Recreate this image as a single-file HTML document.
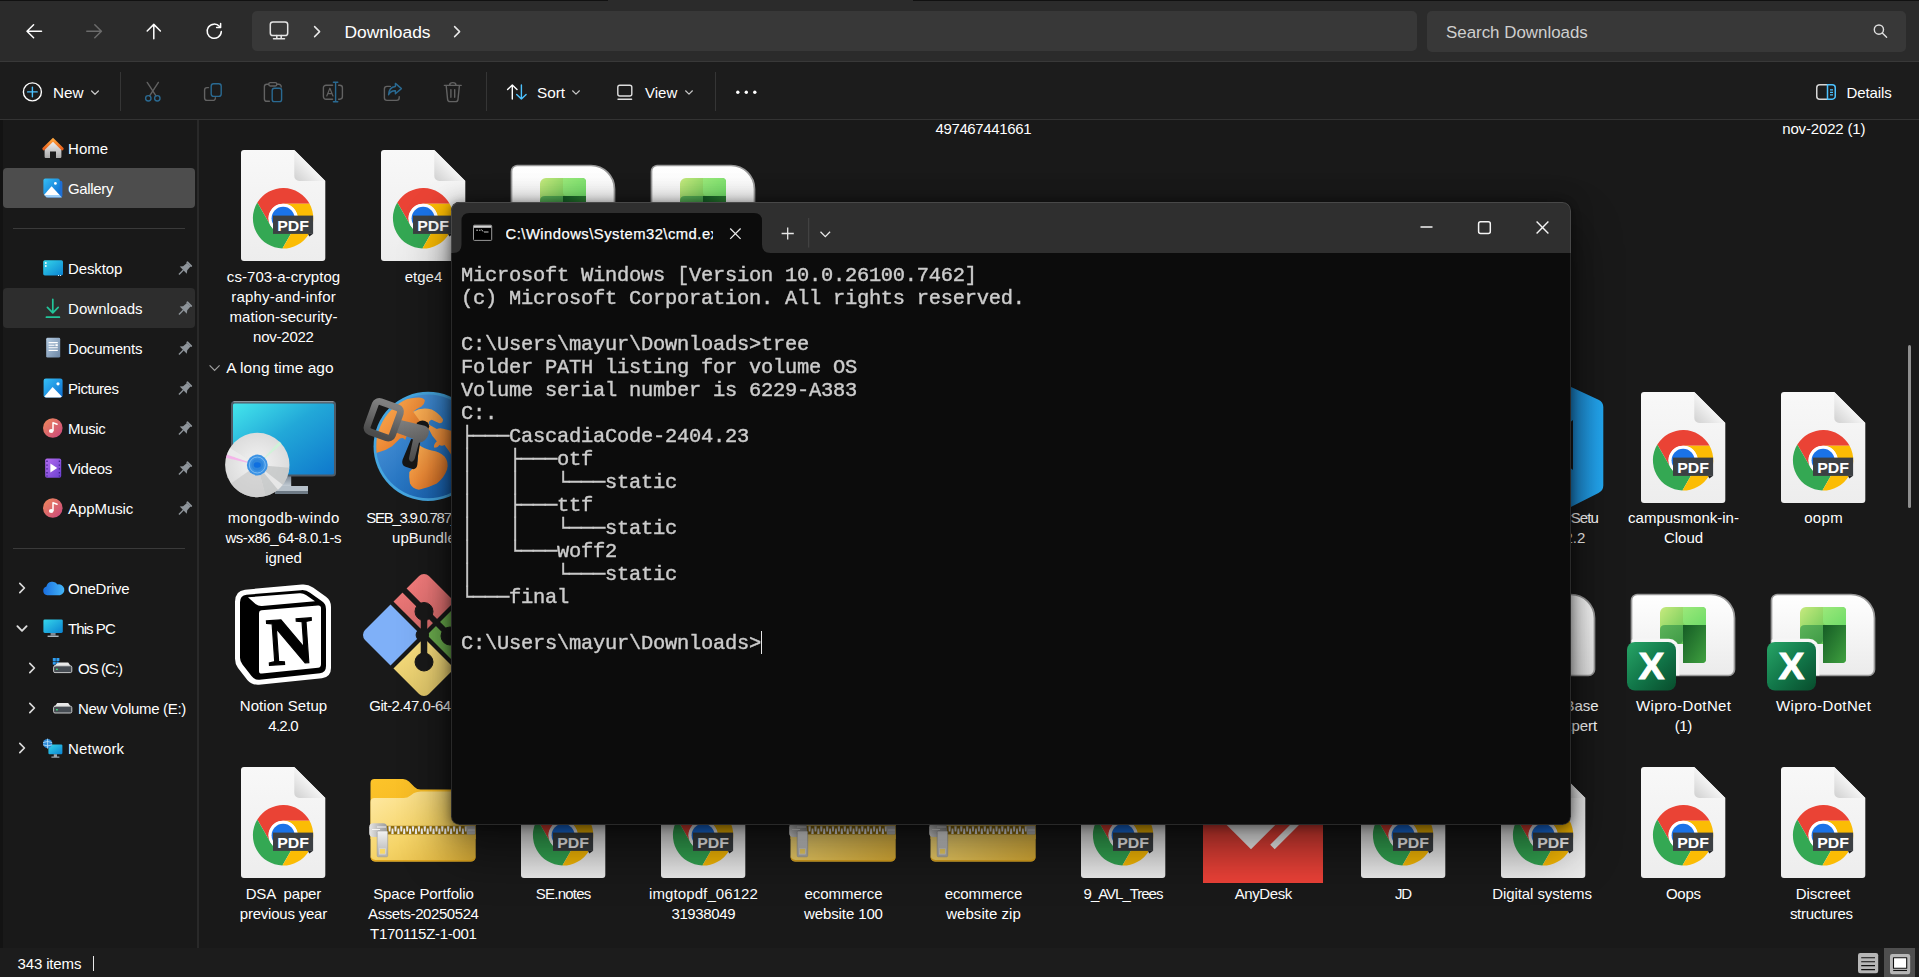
<!DOCTYPE html>
<html lang="en"><head><meta charset="utf-8"><title>Downloads</title>
<style>
*{box-sizing:border-box;margin:0;padding:0}
html,body{width:1919px;height:977px;overflow:hidden;background:#191919}
body{position:relative;font-family:"Liberation Sans",sans-serif;color:#fff;font-size:15px;-webkit-font-smoothing:antialiased}
.abs{position:absolute}
svg{position:absolute;overflow:visible}
.t{position:absolute;white-space:pre;line-height:20px;height:20px}
#nav{position:absolute;left:0;top:0;width:1919px;height:62px;background:#2b2b2b;border-top:1px solid #111;border-bottom:1px solid #383838}
#addr{position:absolute;left:252px;top:11px;width:1165px;height:40px;background:#383838;border-radius:5px}
#search{position:absolute;left:1427px;top:11px;width:479px;height:41px;background:#383838;border-radius:5px}
#tool{position:absolute;left:0;top:62px;width:1919px;height:58px;background:#1c1c1c;border-bottom:1px solid #333}
.vsep{position:absolute;top:72px;width:1px;height:39px;background:#353535}
#side{position:absolute;left:0;top:120px;width:198.5px;height:828px;background:#191919;border-right:2.5px solid #292929;border-left:3px solid #131313}
.sel{position:absolute;left:3px;width:192px;height:40px;border-radius:4px}
.hsep{position:absolute;left:13px;width:172px;height:1px;background:#3a3a3a}
#status{position:absolute;left:0;top:948px;width:1919px;height:29px;background:#1c1c1c}
.lbl{position:absolute;width:140px;text-align:center;line-height:20px;font-size:15px;color:#fff;white-space:pre}
#content{position:absolute;left:199px;top:120px;width:1720px;height:828px;overflow:hidden}
#cin{position:absolute;left:-199px;top:-120px;width:1919px;height:977px}
#term{position:absolute;left:451px;top:202px;width:1120.4px;height:623px;border-radius:8.5px;overflow:hidden;background:#0c0c0c}
#termshadow{position:absolute;left:451px;top:202px;width:1120.4px;height:623px;border-radius:8.5px;box-shadow:0 26px 48px 2px rgba(0,0,0,.46),0 0 22px rgba(0,0,0,.3),0 1px 9px rgba(0,0,0,.32)}
#tbar{position:absolute;left:0;top:0;width:1121px;height:51px;background:#2f2f2f}
pre#tt{position:absolute;left:10px;top:62px;will-change:transform;font-family:"Liberation Mono",monospace;font-size:20.4px;letter-spacing:-0.24px;line-height:23px;color:#cccccc;white-space:pre;-webkit-text-stroke:0.42px #cccccc}
</style></head>
<body>
<div id="nav"></div><div class="abs" style="left:608px;top:0;width:305px;height:1px;background:#2b2b2b"></div>
<div id="addr"></div><div id="search"></div>
<svg style="left:0;top:0" width="1919" height="977" viewBox="0 0 1919 977" fill="none" stroke-linecap="round" stroke-linejoin="round"><path d="M41.5 31.25H27.2M33.6 24.7L27 31.25L33.6 37.8" stroke="#ffffff" stroke-width="1.5"/><path d="M86.8 31.25H101.2M94.8 24.7L101.4 31.25L94.8 37.8" stroke="#6b6b6b" stroke-width="1.5"/><path d="M153.8 38.8V24.6M147.2 31L153.8 24.4L160.4 31" stroke="#ffffff" stroke-width="1.5"/><path d="M219.6 26.6A7.1 7.1 0 1 0 221.3 31.6" stroke="#ffffff" stroke-width="1.5"/><path d="M220.6 23.6V27.6H216.6" stroke="#ffffff" stroke-width="1.5"/><rect x="270.3" y="22" width="17.4" height="13.500" rx="2.6" stroke="#e4e4e4" stroke-width="1.5"/><path d="M273.500 38.800H284.500M276.800 35.600V38.600M281.200 35.600V38.600" stroke="#e4e4e4" stroke-width="1.5"/><path d="M314.6 26.6L319.6 31.6L314.6 36.6" stroke="#e8e8e8" stroke-width="1.5"/><path d="M454.6 26.6L459.6 31.6L454.6 36.6" stroke="#e8e8e8" stroke-width="1.5"/><circle cx="1878.9" cy="29.6" r="4.6" stroke="#e0e0e0" stroke-width="1.4"/><path d="M1882.3 33L1886.6 37.3" stroke="#e0e0e0" stroke-width="1.4"/></svg>
<div class="t" style="left:344.5px;top:21px;line-height:22px;height:22px;font-size:17.4px;color:#fff;">Downloads</div>
<div class="t" style="left:1446px;top:22px;line-height:21px;height:21px;font-size:16.9px;color:#cfcfcf;">Search Downloads</div>
<div id="tool"></div>
<div class="vsep" style="left:120px"></div>
<div class="vsep" style="left:486px"></div>
<div class="vsep" style="left:715px"></div>
<svg style="left:0;top:0" width="1919" height="977" viewBox="0 0 1919 977" fill="none" stroke-linecap="round" stroke-linejoin="round"><circle cx="32.4" cy="91.9" r="9" stroke="#ffffff" stroke-width="1.4"/><path d="M27.6 91.9H37.2M32.4 87.1V96.7" stroke="#4cc2ff" stroke-width="1.4"/><path d="M91.6 91L95 94.3L98.4 91" stroke="#c8c8c8" stroke-width="1.2"/><path d="M147.2 82.4L156 95.8M158.4 82.4L149.6 95.8" stroke="#626262" stroke-width="1.4"/><circle cx="148.3" cy="98.3" r="2.7" stroke="#2a6a92" stroke-width="1.4"/><circle cx="157.3" cy="98.3" r="2.7" stroke="#2a6a92" stroke-width="1.4"/><path d="M208.5 87.6H207A2.4 2.4 0 0 0 204.6 90V98A2.4 2.4 0 0 0 207 100.4H213A2.4 2.4 0 0 0 215.4 98V97.6" stroke="#626262" stroke-width="1.4"/><rect x="211.2" y="83.8" width="10" height="12.6" rx="2.4" stroke="#2a6a92" stroke-width="1.4"/><path d="M269.4 101.3H266.8A2.4 2.4 0 0 1 264.4 98.9V86.6A2.4 2.4 0 0 1 266.8 84.2H268.6M277 84.2H278.8A2.4 2.4 0 0 1 281.2 86.6V87" stroke="#626262" stroke-width="1.4"/><rect x="268.8" y="82.6" width="8" height="3.4" rx="1.4" stroke="#626262" stroke-width="1.4"/><rect x="272.2" y="88.2" width="9.4" height="13.4" rx="2.2" stroke="#2a6a92" stroke-width="1.4"/><path d="M332.6 85.2H326A2.6 2.6 0 0 0 323.4 87.8V96.6A2.6 2.6 0 0 0 326 99.2H332.6M338.6 85.2H339.8A2.6 2.6 0 0 1 342.4 87.8V96.6A2.6 2.6 0 0 1 339.8 99.2H338.6" stroke="#626262" stroke-width="1.4"/><path d="M326.8 96L329.9 88.2L333 96M327.8 93.6H332" stroke="#626262" stroke-width="1.2"/><path d="M335.6 82.6V101.4M333.4 82.2H337.8M333.4 101.8H337.8" stroke="#2a6a92" stroke-width="1.4"/><path d="M390.4 86.4H387A2.6 2.6 0 0 0 384.4 89V97.8A2.6 2.6 0 0 0 387 100.4H396.6A2.6 2.6 0 0 0 399.2 97.8V96.6" stroke="#626262" stroke-width="1.4"/><path d="M395.4 83.4L401.4 88.6L395.4 93.8V90.8C392 90.6 390 92 388.6 94.8C388.8 90.2 391 86.9 395.4 86.5Z" stroke="#2a6a92" stroke-width="1.4"/><path d="M444.4 85.4H461.2M449.6 85.2C449.6 81.8 456 81.8 456 85.2M446.2 85.6L447.6 99.4A2.4 2.4 0 0 0 450 101.6H455.6A2.4 2.4 0 0 0 458 99.4L459.4 85.6M450.9 89.6V97.2M454.7 89.6V97.2" stroke="#626262" stroke-width="1.4"/><path d="M512.3 99V85M507.6 89.6L512.3 84.9L517 89.6" stroke="#ffffff" stroke-width="1.4"/><path d="M521.4 85V99M516.7 94.4L521.4 99.1L526.1 94.4" stroke="#4cc2ff" stroke-width="1.4"/><path d="M572.6 90.8L576 94.1L579.4 90.8" stroke="#c8c8c8" stroke-width="1.2"/><rect x="617.8" y="85.2" width="14" height="10.8" rx="2" stroke="#dedede" stroke-width="1.4"/><path d="M618 99.2H631.6" stroke="#dedede" stroke-width="1.4"/><path d="M685.6 90.8L689 94.1L692.4 90.8" stroke="#c8c8c8" stroke-width="1.2"/><circle cx="737.8" cy="92.2" r="1.7" fill="#ffffff"/><circle cx="746.3" cy="92.2" r="1.7" fill="#ffffff"/><circle cx="754.8" cy="92.2" r="1.7" fill="#ffffff"/><path d="M1827.500 84.850H1819.750A3 3 0 0 0 1816.750 87.850V96.150A3 3 0 0 0 1819.750 99.150H1827.500" stroke="#d6d6d6" stroke-width="1.500"/><path d="M1827.500 84.850H1832.250A3 3 0 0 1 1835.250 87.850V96.150A3 3 0 0 1 1832.250 99.150H1827.500Z" stroke="#4cc2ff" stroke-width="1.500"/><path d="M1830 89.800H1833M1830 92.300H1833M1830 94.800H1833" stroke="#4cc2ff" stroke-width="1.300" stroke-linecap="butt"/></svg>
<div class="t" style="left:53px;top:82px;line-height:21px;height:21px;font-size:15.3px;color:#fff;">New</div>
<div class="t" style="left:537px;top:82px;line-height:21px;height:21px;font-size:15.3px;color:#fff;">Sort</div>
<div class="t" style="left:645px;top:82px;line-height:21px;height:21px;font-size:15px;color:#fff;">View</div>
<div class="t" style="left:1846.6px;top:82px;line-height:21px;height:21px;font-size:15px;color:#fff;letter-spacing:-0.122px;">Details</div>
<div id="side"></div>
<div class="sel" style="top:168px;background:#4d4d4d"></div>
<div class="sel" style="top:288px;background:#2d2d2d"></div>
<div class="hsep" style="top:228px"></div><div class="hsep" style="top:548px"></div>
<div class="t" style="left:68px;top:138px;line-height:21px;height:21px;font-size:15px;color:#fff;letter-spacing:0.047px;">Home</div>
<div class="t" style="left:68px;top:178px;line-height:21px;height:21px;font-size:15px;color:#fff;letter-spacing:-0.331px;">Gallery</div>
<div class="t" style="left:68px;top:258px;line-height:21px;height:21px;font-size:15px;color:#fff;letter-spacing:-0.118px;">Desktop</div>
<div class="t" style="left:68px;top:298px;line-height:21px;height:21px;font-size:15px;color:#fff;letter-spacing:0.043px;">Downloads</div>
<div class="t" style="left:68px;top:338px;line-height:21px;height:21px;font-size:15px;color:#fff;letter-spacing:-0.174px;">Documents</div>
<div class="t" style="left:68px;top:378px;line-height:21px;height:21px;font-size:15px;color:#fff;letter-spacing:-0.461px;">Pictures</div>
<div class="t" style="left:68px;top:418px;line-height:21px;height:21px;font-size:15px;color:#fff;letter-spacing:-0.354px;">Music</div>
<div class="t" style="left:68px;top:458px;line-height:21px;height:21px;font-size:15px;color:#fff;letter-spacing:-0.249px;">Videos</div>
<div class="t" style="left:68px;top:498px;line-height:21px;height:21px;font-size:15px;color:#fff;letter-spacing:-0.070px;">AppMusic</div>
<div class="t" style="left:68px;top:578px;line-height:21px;height:21px;font-size:15px;color:#fff;letter-spacing:-0.257px;">OneDrive</div>
<div class="t" style="left:68px;top:618px;line-height:21px;height:21px;font-size:15px;color:#fff;letter-spacing:-0.935px;">This PC</div>
<div class="t" style="left:78px;top:658px;line-height:21px;height:21px;font-size:15px;color:#fff;letter-spacing:-0.962px;">OS (C:)</div>
<div class="t" style="left:78px;top:698px;line-height:21px;height:21px;font-size:15px;color:#fff;letter-spacing:-0.303px;">New Volume (E:)</div>
<div class="t" style="left:68px;top:738px;line-height:21px;height:21px;font-size:15px;color:#fff;letter-spacing:0.184px;">Network</div>
<svg style="left:0;top:0" width="1919" height="977" viewBox="0 0 1919 977" fill="none" stroke-linecap="round" stroke-linejoin="round"><defs><linearGradient id="gHome" x1="0" y1="0" x2="0" y2="1"><stop offset="0" stop-color="#ffa43d"/><stop offset="1" stop-color="#e8601c"/></linearGradient><linearGradient id="gBlue" x1="0" y1="0" x2="1" y2="1"><stop offset="0" stop-color="#36c0f6"/><stop offset="1" stop-color="#0b6cd0"/></linearGradient><linearGradient id="gDesk" x1="0" y1="0" x2="1" y2="1"><stop offset="0" stop-color="#35d6ea"/><stop offset="1" stop-color="#0b83d2"/></linearGradient><linearGradient id="gMusic" x1="0" y1="0" x2="1" y2="1"><stop offset="0" stop-color="#f08a5a"/><stop offset="1" stop-color="#c8457e"/></linearGradient><linearGradient id="gVid" x1="0" y1="0" x2="1" y2="1"><stop offset="0" stop-color="#b56cf0"/><stop offset="1" stop-color="#6a3fd0"/></linearGradient><linearGradient id="gCloud" x1="0" y1="0" x2="1" y2="0"><stop offset="0" stop-color="#1a6fe0"/><stop offset="1" stop-color="#44b6f8"/></linearGradient><linearGradient id="gHouse" x1="0" y1="0" x2="0" y2="1"><stop offset="0" stop-color="#f4f4f4"/><stop offset="1" stop-color="#a9a9a9"/></linearGradient><linearGradient id="gDoc" x1="0" y1="0" x2="1" y2="1"><stop offset="0" stop-color="#b4cbe2"/><stop offset="1" stop-color="#6d87a4"/></linearGradient></defs><path d="M44.600 148.400V156.800A1.200 1.200 0 0 0 45.800 158H50V151.400H56V158H60.200A1.200 1.200 0 0 0 61.400 156.800V148.400L53 140.800Z" fill="url(#gHouse)" stroke="none"/><path d="M43.800 148.800L53 139.800L62.200 148.800" stroke="url(#gHome)" stroke-width="3" fill="none" stroke-linejoin="miter" stroke-linecap="round"/><rect x="46.4" y="180.8" width="16" height="16.6" rx="2" fill="#1d6fd6" stroke="none"/><rect x="43.4" y="178.4" width="16.4" height="16.6" rx="2" fill="url(#gBlue)" stroke="none"/><path d="M44 195L51.6 186.2L59.6 195Z" fill="#fff" stroke="none"/><path d="M46.6 197.4H62L59.6 195H44Z" fill="#9fd0f8" stroke="none"/><circle cx="55.4" cy="183.4" r="1.4" fill="#fff" stroke="none"/><rect x="43.2" y="260.2" width="19.8" height="15.2" rx="1.6" fill="url(#gDesk)" stroke="none"/><rect x="45" y="262.2" width="1.6" height="1.6" fill="#fff" stroke="none"/><rect x="45" y="265.2" width="1.6" height="1.6" fill="#fff" stroke="none"/><rect x="58" y="275" width="1" height="1" fill="#d8e8f0" stroke="none"/><rect x="60" y="275" width="1" height="1" fill="#d8e8f0" stroke="none"/><path d="M52.8 299.4V312.6M47.4 307.4L52.8 312.8L58.2 307.4M46.4 317.2H59.4" stroke="#23c49a" stroke-width="1.7" fill="none"/><rect x="46.200" y="337.800" width="14" height="19.800" rx="1.400" fill="url(#gDoc)" stroke="none"/><path d="M48.600 342.600H57.800M48.600 345.200H54.600M48.600 347.800H57.800M48.600 350.400H57.800" stroke="#fff" stroke-width="1.100" fill="none" stroke-linecap="butt"/><rect x="55.400" y="344.200" width="2.400" height="2" fill="#fff" stroke="none"/><rect x="43.6" y="378.6" width="19" height="18.8" rx="2.2" fill="url(#gBlue)" stroke="none"/><path d="M44.4 396.6L52.6 387L61.8 396.6Q61.4 397.4 60.4 397.4H45.8Q44.8 397.4 44.4 396.6Z" fill="#fff" stroke="none"/><circle cx="58" cy="383.8" r="1.6" fill="#fff" stroke="none"/><circle cx="52.8" cy="428" r="9.8" fill="url(#gMusic)" stroke="none"/><path d="M53 422.8V430.6M53 422.8L57 424.2" stroke="#fff" stroke-width="1.5" fill="none"/><ellipse cx="51.2" cy="431" rx="2.3" ry="1.9" fill="#fff" stroke="none"/><circle cx="52.8" cy="508" r="9.8" fill="url(#gMusic)" stroke="none"/><path d="M53 502.8V510.6M53 502.8L57 504.2" stroke="#fff" stroke-width="1.5" fill="none"/><ellipse cx="51.2" cy="511" rx="2.3" ry="1.9" fill="#fff" stroke="none"/><rect x="45.200" y="458.400" width="16" height="19.400" rx="1.800" fill="url(#gVid)" stroke="none"/><path d="M50.400 463.600L57.200 468L50.400 472.400Z" fill="#fff" stroke="none"/><path d="M47 460.600V462M47 464.400V465.800M47 468.200V469.600M47 472V473.400M47 475.400V476.400M59.400 460.600V462M59.400 464.400V465.800M59.400 468.200V469.600M59.400 472V473.400M59.400 475.400V476.400" stroke="#3d1f8a" stroke-width="1.300" fill="none" stroke-linecap="butt"/><g transform="translate(184.7 268.7) rotate(45) scale(1.13)" fill="#8e949a" stroke="none"><rect x="-3.1" y="-6.6" width="6.2" height="1.8" rx=".6"/><path d="M-2.2 -5H2.2L2.6 -0.6L4.4 1.8H-4.4L-2.6 -0.6Z"/><rect x="-.6" y="1.6" width="1.2" height="5.6"/></g><g transform="translate(184.7 308.7) rotate(45) scale(1.13)" fill="#8e949a" stroke="none"><rect x="-3.1" y="-6.6" width="6.2" height="1.8" rx=".6"/><path d="M-2.2 -5H2.2L2.6 -0.6L4.4 1.8H-4.4L-2.6 -0.6Z"/><rect x="-.6" y="1.6" width="1.2" height="5.6"/></g><g transform="translate(184.7 348.7) rotate(45) scale(1.13)" fill="#8e949a" stroke="none"><rect x="-3.1" y="-6.6" width="6.2" height="1.8" rx=".6"/><path d="M-2.2 -5H2.2L2.6 -0.6L4.4 1.8H-4.4L-2.6 -0.6Z"/><rect x="-.6" y="1.6" width="1.2" height="5.6"/></g><g transform="translate(184.7 388.7) rotate(45) scale(1.13)" fill="#8e949a" stroke="none"><rect x="-3.1" y="-6.6" width="6.2" height="1.8" rx=".6"/><path d="M-2.2 -5H2.2L2.6 -0.6L4.4 1.8H-4.4L-2.6 -0.6Z"/><rect x="-.6" y="1.6" width="1.2" height="5.6"/></g><g transform="translate(184.7 428.7) rotate(45) scale(1.13)" fill="#8e949a" stroke="none"><rect x="-3.1" y="-6.6" width="6.2" height="1.8" rx=".6"/><path d="M-2.2 -5H2.2L2.6 -0.6L4.4 1.8H-4.4L-2.6 -0.6Z"/><rect x="-.6" y="1.6" width="1.2" height="5.6"/></g><g transform="translate(184.7 468.7) rotate(45) scale(1.13)" fill="#8e949a" stroke="none"><rect x="-3.1" y="-6.6" width="6.2" height="1.8" rx=".6"/><path d="M-2.2 -5H2.2L2.6 -0.6L4.4 1.8H-4.4L-2.6 -0.6Z"/><rect x="-.6" y="1.6" width="1.2" height="5.6"/></g><g transform="translate(184.7 508.7) rotate(45) scale(1.13)" fill="#8e949a" stroke="none"><rect x="-3.1" y="-6.6" width="6.2" height="1.8" rx=".6"/><path d="M-2.2 -5H2.2L2.6 -0.6L4.4 1.8H-4.4L-2.6 -0.6Z"/><rect x="-.6" y="1.6" width="1.2" height="5.6"/></g><path d="M47.2 595.2A4.4 4.4 0 0 1 46.4 586.6A6.2 6.2 0 0 1 57.6 584.4A5.4 5.4 0 0 1 60 595.2Z" fill="url(#gCloud)" stroke="none"/><rect x="43.4" y="619.4" width="19.4" height="13.6" rx="1.4" fill="url(#gDesk)" stroke="none"/><path d="M50.6 633H55.6V635.6H50.6Z" fill="#7d8a96" stroke="none"/><path d="M47.6 635.6H58.6V637H47.6Z" fill="#aab4bd" stroke="none"/><path d="M54.800 666L57.200 662.600H68.200L70.600 666Z" fill="#e9e9e9" stroke="none"/><rect x="53.600" y="665.800" width="18.200" height="6.800" rx="1.400" fill="#464c53" stroke="#d9d9d9" stroke-width=".9"/><rect x="56" y="668.600" width="1.800" height="1.400" fill="#3fe07a" stroke="none"/><rect x="52.800" y="658" width="3" height="3" fill="#2f9df0" stroke="none"/><rect x="56.400" y="658" width="3" height="3" fill="#2f9df0" stroke="none"/><rect x="52.800" y="661.600" width="3" height="3" fill="#2f9df0" stroke="none"/><rect x="56.400" y="661.600" width="2.200" height="1.600" fill="#2f9df0" stroke="none"/><path d="M54.800 706.400L57.200 703H68.200L70.600 706.400Z" fill="#e9e9e9" stroke="none"/><rect x="53.600" y="706.200" width="18.200" height="6.800" rx="1.400" fill="#464c53" stroke="#d9d9d9" stroke-width=".9"/><rect x="56" y="709" width="1.800" height="1.400" fill="#3fe07a" stroke="none"/><rect x="48.4" y="744.6" width="14" height="9.6" rx="1.2" fill="url(#gDesk)" stroke="none"/><path d="M53.8 754.2H57V756.4H53.8ZM51.4 756.4H59.4V757.8H51.4Z" fill="#9aa6b0" stroke="none"/><circle cx="47.6" cy="743.6" r="4.6" fill="#2d8ad8" stroke="none"/><path d="M43.4 742.4Q47.6 740.4 51.8 742.4M43.4 745Q47.6 747 51.8 745M47.6 739V748.2" stroke="#bfe3fa" stroke-width=".8" fill="none"/><path d="M19.8 583.4L24.4 588L19.8 592.6" stroke="#dcdcdc" stroke-width="1.7" fill="none"/><path d="M17.4 626.1999999999999L22 630.8L26.6 626.1999999999999" stroke="#dcdcdc" stroke-width="1.9" fill="none"/><path d="M29.8 663.4L34.4 668L29.8 672.6" stroke="#dcdcdc" stroke-width="1.7" fill="none"/><path d="M29.8 703.4L34.4 708L29.8 712.6" stroke="#dcdcdc" stroke-width="1.7" fill="none"/><path d="M19.8 743.4L24.4 748L19.8 752.6" stroke="#dcdcdc" stroke-width="1.7" fill="none"/></svg>
<div id="content"><div id="cin">
<div class="lbl" style="left:913.5px;top:118px;line-height:21px;height:21px;letter-spacing:-0.376px;margin-left:-0.19px">497467441661</div>
<div class="lbl" style="left:1753.9px;top:118px;line-height:21px;height:21px;letter-spacing:-0.154px;margin-left:-0.08px">nov-2022 (1)</div>
<svg style="left:240.8px;top:150.35px" width="85" height="111" viewBox="0 0 85 111"><defs><linearGradient id="pg1" x1="0" y1="0" x2="0" y2="1"><stop offset="0" stop-color="#f8f8f8"/><stop offset="1" stop-color="#ededed"/></linearGradient><linearGradient id="pf2" x1="0" y1="1" x2="1" y2="0"><stop offset="0" stop-color="#cfcfcf"/><stop offset=".45" stop-color="#f1f1f1"/><stop offset="1" stop-color="#fbfbfb"/></linearGradient></defs><path d="M3 0H53.300L84.300 31V108A3 3 0 0 1 81.300 111H3A3 3 0 0 1 0 108V3A3 3 0 0 1 3 0Z" fill="url(#pg1)"/><path d="M53.300 0L84.300 31H58.300A5 5 0 0 1 53.300 26Z" fill="url(#pf2)"/><circle cx="42.100" cy="68.300" r="29.800" fill="#fff"/><path d="M42.10 53.80L68.59 53.80A30.2 30.2 0 0 0 16.30 52.61L29.54 75.55A14.5 14.5 0 0 1 42.10 53.80Z" fill="#ea4335"/><path d="M29.54 75.55L16.30 52.61A30.2 30.2 0 0 0 41.41 98.49L54.66 75.55A14.5 14.5 0 0 1 29.54 75.55Z" fill="#34a853"/><path d="M54.66 75.55L41.41 98.49A30.2 30.2 0 0 0 68.59 53.80L42.10 53.80A14.5 14.5 0 0 1 54.66 75.55Z" fill="#fbbc04"/><circle cx="42.100" cy="68.300" r="14.500" fill="#fff"/><circle cx="42.100" cy="68.300" r="11.500" fill="#1a73e8"/><path d="M67 83.800H72.100L68.300 86.600Z" fill="#202124"/><rect x="32" y="65.600" width="40.100" height="18.300" fill="#3c4043"/><text x="52.100" y="80.500" text-anchor="middle" font-family="Liberation Sans, sans-serif" font-weight="bold" font-size="14.500" fill="#fff" textLength="31.800" lengthAdjust="spacingAndGlyphs">PDF</text></svg>
<div class="lbl" style="left:213.5px;top:266px;line-height:21px;height:21px;letter-spacing:0.047px;margin-left:0.02px">cs-703-a-cryptog</div><div class="lbl" style="left:213.5px;top:286px;line-height:21px;height:21px;letter-spacing:0.198px;margin-left:0.10px">raphy-and-infor</div><div class="lbl" style="left:213.5px;top:306px;line-height:21px;height:21px;letter-spacing:0.082px;margin-left:0.04px">mation-security-</div><div class="lbl" style="left:213.5px;top:326px;line-height:21px;height:21px;letter-spacing:-0.244px;margin-left:-0.12px">nov-2022</div>
<svg style="left:380.8px;top:150.35px" width="85" height="111" viewBox="0 0 85 111"><defs><linearGradient id="pg3" x1="0" y1="0" x2="0" y2="1"><stop offset="0" stop-color="#f8f8f8"/><stop offset="1" stop-color="#ededed"/></linearGradient><linearGradient id="pf4" x1="0" y1="1" x2="1" y2="0"><stop offset="0" stop-color="#cfcfcf"/><stop offset=".45" stop-color="#f1f1f1"/><stop offset="1" stop-color="#fbfbfb"/></linearGradient></defs><path d="M3 0H53.300L84.300 31V108A3 3 0 0 1 81.300 111H3A3 3 0 0 1 0 108V3A3 3 0 0 1 3 0Z" fill="url(#pg3)"/><path d="M53.300 0L84.300 31H58.300A5 5 0 0 1 53.300 26Z" fill="url(#pf4)"/><circle cx="42.100" cy="68.300" r="29.800" fill="#fff"/><path d="M42.10 53.80L68.59 53.80A30.2 30.2 0 0 0 16.30 52.61L29.54 75.55A14.5 14.5 0 0 1 42.10 53.80Z" fill="#ea4335"/><path d="M29.54 75.55L16.30 52.61A30.2 30.2 0 0 0 41.41 98.49L54.66 75.55A14.5 14.5 0 0 1 29.54 75.55Z" fill="#34a853"/><path d="M54.66 75.55L41.41 98.49A30.2 30.2 0 0 0 68.59 53.80L42.10 53.80A14.5 14.5 0 0 1 54.66 75.55Z" fill="#fbbc04"/><circle cx="42.100" cy="68.300" r="14.500" fill="#fff"/><circle cx="42.100" cy="68.300" r="11.500" fill="#1a73e8"/><path d="M67 83.800H72.100L68.300 86.600Z" fill="#202124"/><rect x="32" y="65.600" width="40.100" height="18.300" fill="#3c4043"/><text x="52.100" y="80.500" text-anchor="middle" font-family="Liberation Sans, sans-serif" font-weight="bold" font-size="14.500" fill="#fff" textLength="31.800" lengthAdjust="spacingAndGlyphs">PDF</text></svg>
<div class="lbl" style="left:353.5px;top:266px;line-height:21px;height:21px;letter-spacing:0.013px;margin-left:0.01px">etge4</div>
<svg style="left:507px;top:165px" width="112" height="100" viewBox="0 0 112 100"><defs><linearGradient id="xk9" x1="0" y1="0" x2="0" y2="1"><stop offset="0" stop-color="#ffffff"/><stop offset="1" stop-color="#ebebeb"/></linearGradient><linearGradient id="xa5" x1="0" y1="0" x2="1" y2="1"><stop offset="0" stop-color="#c7ea7e"/><stop offset=".6" stop-color="#5fc552"/><stop offset="1" stop-color="#4cb548"/></linearGradient><linearGradient id="xb6" x1="0" y1="0" x2="1" y2="1"><stop offset="0" stop-color="#155c25"/><stop offset="1" stop-color="#3fa03f"/></linearGradient><linearGradient id="xc7" x1="0" y1="0" x2="1" y2="1"><stop offset="0" stop-color="#9be87a"/><stop offset="1" stop-color="#6fdc68"/></linearGradient><linearGradient id="xh10" x1="0" y1="0" x2="1" y2="1"><stop offset="0" stop-color="#5cb35a"/><stop offset="1" stop-color="#3f9a46"/></linearGradient><linearGradient id="xe8" x1="0" y1="0" x2="1" y2="1"><stop offset="0" stop-color="#27a567"/><stop offset=".5" stop-color="#12784a"/><stop offset="1" stop-color="#084c2c"/></linearGradient></defs><clipPath id="xp11"><path d="M10 .5H84A23.5 23.5 0 0 1 107.5 24V75.5A6 6 0 0 1 101.5 81.5H10A6 6 0 0 1 4.500 75.5V6.500A6 6 0 0 1 10 .5Z"/></clipPath><path d="M10 .5H84A23.5 23.5 0 0 1 107.5 24V75.5A6 6 0 0 1 101.5 81.5H10A6 6 0 0 1 4.500 75.5V6.500A6 6 0 0 1 10 .5Z" fill="url(#xk9)" stroke="#989898" stroke-width="1.700"/><path d="M39 13H75A4 4 0 0 1 79 17V65A4 4 0 0 1 75 69H56V50H33V19A6 6 0 0 1 39 13Z" fill="url(#xa5)"/><path d="M56 31H79V65A4 4 0 0 1 75 69H56Z" fill="url(#xb6)"/><path d="M33 36Q33 31 38 31H56V45Q56 50 51 50H33Z" fill="url(#xh10)"/><path d="M56 13H75A4 4 0 0 1 79 17V31H60A4 4 0 0 1 56 27Z" fill="url(#xc7)"/><rect x="-1.6" y="44.800" width="54" height="54" rx="10.500" fill="#f6f6f6" clip-path="url(#xp11)"/><rect x="0" y="48" width="49" height="48.6" rx="8" fill="url(#xe8)"/><text x="24.5" y="85.4" text-anchor="middle" font-family="Liberation Sans, sans-serif" font-weight="bold" font-size="36.5" fill="#fff" stroke="#fff" stroke-width=".9" textLength="26" lengthAdjust="spacingAndGlyphs">X</text></svg>
<div class="lbl" style="left:493.5px;top:266px;line-height:21px;height:21px">Book1</div>
<svg style="left:647px;top:165px" width="112" height="100" viewBox="0 0 112 100"><defs><linearGradient id="xk16" x1="0" y1="0" x2="0" y2="1"><stop offset="0" stop-color="#ffffff"/><stop offset="1" stop-color="#ebebeb"/></linearGradient><linearGradient id="xa12" x1="0" y1="0" x2="1" y2="1"><stop offset="0" stop-color="#c7ea7e"/><stop offset=".6" stop-color="#5fc552"/><stop offset="1" stop-color="#4cb548"/></linearGradient><linearGradient id="xb13" x1="0" y1="0" x2="1" y2="1"><stop offset="0" stop-color="#155c25"/><stop offset="1" stop-color="#3fa03f"/></linearGradient><linearGradient id="xc14" x1="0" y1="0" x2="1" y2="1"><stop offset="0" stop-color="#9be87a"/><stop offset="1" stop-color="#6fdc68"/></linearGradient><linearGradient id="xh17" x1="0" y1="0" x2="1" y2="1"><stop offset="0" stop-color="#5cb35a"/><stop offset="1" stop-color="#3f9a46"/></linearGradient><linearGradient id="xe15" x1="0" y1="0" x2="1" y2="1"><stop offset="0" stop-color="#27a567"/><stop offset=".5" stop-color="#12784a"/><stop offset="1" stop-color="#084c2c"/></linearGradient></defs><clipPath id="xp18"><path d="M10 .5H84A23.5 23.5 0 0 1 107.5 24V75.5A6 6 0 0 1 101.5 81.5H10A6 6 0 0 1 4.500 75.5V6.500A6 6 0 0 1 10 .5Z"/></clipPath><path d="M10 .5H84A23.5 23.5 0 0 1 107.5 24V75.5A6 6 0 0 1 101.5 81.5H10A6 6 0 0 1 4.500 75.5V6.500A6 6 0 0 1 10 .5Z" fill="url(#xk16)" stroke="#989898" stroke-width="1.700"/><path d="M39 13H75A4 4 0 0 1 79 17V65A4 4 0 0 1 75 69H56V50H33V19A6 6 0 0 1 39 13Z" fill="url(#xa12)"/><path d="M56 31H79V65A4 4 0 0 1 75 69H56Z" fill="url(#xb13)"/><path d="M33 36Q33 31 38 31H56V45Q56 50 51 50H33Z" fill="url(#xh17)"/><path d="M56 13H75A4 4 0 0 1 79 17V31H60A4 4 0 0 1 56 27Z" fill="url(#xc14)"/><rect x="-1.6" y="44.800" width="54" height="54" rx="10.500" fill="#f6f6f6" clip-path="url(#xp18)"/><rect x="0" y="48" width="49" height="48.6" rx="8" fill="url(#xe15)"/><text x="24.5" y="85.4" text-anchor="middle" font-family="Liberation Sans, sans-serif" font-weight="bold" font-size="36.5" fill="#fff" stroke="#fff" stroke-width=".9" textLength="26" lengthAdjust="spacingAndGlyphs">X</text></svg>
<div class="lbl" style="left:633.5px;top:266px;line-height:21px;height:21px">Book2</div>
<svg style="left:0;top:0" width="1919" height="977" viewBox="0 0 1919 977"><path d="M209.600 365.300L214.600 370.300L219.600 365.300" stroke="#a0a0a0" stroke-width="1.200" fill="none"/></svg>
<div class="t" style="left:226.200px;top:357px;line-height:21px;height:21px;font-size:15.500px;letter-spacing:0.043px">A long time ago</div>
<svg style="left:0;top:0" width="1919" height="977" viewBox="0 0 1919 977"><defs><linearGradient id="mon" x1="0" y1="0" x2="1" y2="1"><stop offset="0" stop-color="#44e6ec"/><stop offset=".45" stop-color="#22a8d8"/><stop offset="1" stop-color="#0f78cc"/></linearGradient><linearGradient id="stand" x1="0" y1="0" x2="0" y2="1"><stop offset="0" stop-color="#7b8794"/><stop offset="1" stop-color="#c3ccd4"/></linearGradient><radialGradient id="disc" cx=".5" cy=".5" r=".5"><stop offset="0" stop-color="#f4f4f4"/><stop offset="1" stop-color="#dcdcdc"/></radialGradient></defs><path d="M277 476H291.200V486H277Z" fill="url(#stand)"/><path d="M275 486H308V494H275Z" fill="#b6c0c9"/><path d="M275 491H308V494H275Z" fill="#6f7b86"/><rect x="231" y="401" width="105" height="75.500" rx="3.500" fill="#4e5a66"/><path d="M233.500 401.700H333.500" stroke="#8d979f" stroke-width="1.200"/><rect x="233" y="403.500" width="101" height="71" rx="1.500" fill="url(#mon)"/><circle cx="257.300" cy="465" r="32.200" fill="url(#disc)"/><path d="M257.3 465L289.4 467.8A32.2 32.2 0 0 1 265.6 496.1Z" fill="#c2c4c4" opacity="0.75"/><path d="M257.3 465L282.7 484.8A32.2 32.2 0 0 1 278.0 489.7Z" fill="#eeeeee" opacity="0.8"/><path d="M257.3 465L265.6 496.1A32.2 32.2 0 0 1 230.9 483.5Z" fill="#cacaca" opacity="0.7"/><path d="M257.3 465L225.9 457.8A32.2 32.2 0 0 1 226.9 454.5Z" fill="#f6b0ea" opacity="0.9"/><path d="M257.3 465L226.9 454.5A32.2 32.2 0 0 1 230.0 447.9Z" fill="#eeeeee" opacity="0.7"/><path d="M257.3 465L279.3 441.5A32.2 32.2 0 0 1 281.6 443.9Z" fill="#ccf6d6" opacity="0.8"/><circle cx="257.300" cy="465" r="10.400" fill="#3b92e4"/><circle cx="257.300" cy="465" r="8" fill="none" stroke="#8cc4f4" stroke-width=".8"/><circle cx="257.300" cy="465" r="5.800" fill="#2f86dc"/><ellipse cx="257.300" cy="465" rx="3.600" ry="2.800" fill="#0f6fe0"/></svg>
<div class="lbl" style="left:213.5px;top:507px;line-height:21px;height:21px;letter-spacing:0.405px;margin-left:0.20px">mongodb-windo</div><div class="lbl" style="left:213.5px;top:527px;line-height:21px;height:21px;letter-spacing:-0.453px;margin-left:-0.23px">ws-x86_64-8.0.1-s</div><div class="lbl" style="left:213.5px;top:547px;line-height:21px;height:21px;letter-spacing:-0.001px;margin-left:-0.00px">igned</div>
<svg style="left:0;top:0" width="1919" height="977" viewBox="0 0 1919 977"><defs><linearGradient id="glb" x1="0" y1="0" x2="1" y2="1"><stop offset="0" stop-color="#5a9fe0"/><stop offset=".5" stop-color="#2a78c4"/><stop offset="1" stop-color="#0f55a4"/></linearGradient><linearGradient id="land" x1="0" y1="0" x2="1" y2="1"><stop offset="0" stop-color="#fdb458"/><stop offset=".5" stop-color="#ee8c38"/><stop offset="1" stop-color="#c8621e"/></linearGradient><linearGradient id="key" x1="0" y1="0" x2="0" y2="1"><stop offset="0" stop-color="#808080"/><stop offset=".5" stop-color="#666"/><stop offset="1" stop-color="#4c4c4c"/></linearGradient><clipPath id="gclip"><circle cx="572" cy="480" r="406"/></clipPath></defs><g transform="translate(355 385) scale(0.127877)"><circle cx="572" cy="480" r="427" fill="#45a6e0"/><circle cx="572" cy="480" r="406" fill="url(#glb)"/><g clip-path="url(#gclip)" fill="url(#land)"><path d="M150 540L178 528Q240 512 290 478Q330 440 352 418Q380 405 392 430L420 360L560 330L520 250L455 212Q470 190 520 168Q550 140 545 118Q530 90 470 100L330 120L190 260L150 400Z"/><path d="M455 210Q520 170 600 192Q650 215 688 268Q690 300 660 300Q630 285 600 272Q570 280 580 310L640 345Q660 335 690 342L760 360L900 380L900 700L760 560Q740 520 700 470Q680 480 660 470Q650 490 620 490Q610 470 640 440Q600 400 580 350L520 300Z"/><path d="M500 468Q540 500 600 512Q660 520 700 560Q735 600 720 660Q700 720 640 770Q580 800 500 820Q450 810 430 770Q420 720 425 680Q470 640 488 600Z"/></g><ellipse cx="528" cy="322" rx="52" ry="44" fill="#161616"/><path d="M440 420L372 585Q360 625 395 640L455 658Q485 655 488 620L492 560L510 450Z" fill="#161616"/><path d="M330 268L545 318Q590 335 575 385Q560 440 500 452L470 565Q462 600 440 600Q415 592 425 560L455 420L320 372Z" fill="url(#key)"/><g transform="translate(225 272) rotate(20)"><rect x="-104" y="-125" width="208" height="250" rx="34" fill="none" stroke="url(#key)" stroke-width="54"/></g></g></svg>
<div class="t" style="left:366.3px;top:507px;line-height:21px;height:21px;letter-spacing:-1.270px">SEB_3.9.0.787_Set</div>
<div class="t" style="left:392px;top:527px;line-height:21px;height:21px;letter-spacing:0.050px">upBundle</div>
<svg style="left:0;top:0" width="1919" height="977" viewBox="0 0 1919 977"><defs><linearGradient id="vs" x1="0" y1="0" x2="1" y2="0"><stop offset="0" stop-color="#1a78c2"/><stop offset="1" stop-color="#23a9f2"/></linearGradient></defs><path d="M1549 376.800L1598.500 399.800Q1603.300 402 1603.300 407V485.500Q1603.300 490.500 1598.500 493L1549 518Z" fill="url(#vs)"/><path d="M1573 420V470L1540 445Z" fill="#191919"/></svg>
<div class="t" style="left:1492.1px;letter-spacing:-0.9px;top:507px;line-height:21px;height:21px">VSCodeUserSetu</div>
<div class="t" style="left:1488.6px;top:527px;line-height:21px;height:21px">p-x64-1.96.2.2</div>
<svg style="left:1640.8px;top:391.55px" width="85" height="111" viewBox="0 0 85 111"><defs><linearGradient id="pg19" x1="0" y1="0" x2="0" y2="1"><stop offset="0" stop-color="#f8f8f8"/><stop offset="1" stop-color="#ededed"/></linearGradient><linearGradient id="pf20" x1="0" y1="1" x2="1" y2="0"><stop offset="0" stop-color="#cfcfcf"/><stop offset=".45" stop-color="#f1f1f1"/><stop offset="1" stop-color="#fbfbfb"/></linearGradient></defs><path d="M3 0H53.300L84.300 31V108A3 3 0 0 1 81.300 111H3A3 3 0 0 1 0 108V3A3 3 0 0 1 3 0Z" fill="url(#pg19)"/><path d="M53.300 0L84.300 31H58.300A5 5 0 0 1 53.300 26Z" fill="url(#pf20)"/><circle cx="42.100" cy="68.300" r="29.800" fill="#fff"/><path d="M42.10 53.80L68.59 53.80A30.2 30.2 0 0 0 16.30 52.61L29.54 75.55A14.5 14.5 0 0 1 42.10 53.80Z" fill="#ea4335"/><path d="M29.54 75.55L16.30 52.61A30.2 30.2 0 0 0 41.41 98.49L54.66 75.55A14.5 14.5 0 0 1 29.54 75.55Z" fill="#34a853"/><path d="M54.66 75.55L41.41 98.49A30.2 30.2 0 0 0 68.59 53.80L42.10 53.80A14.5 14.5 0 0 1 54.66 75.55Z" fill="#fbbc04"/><circle cx="42.100" cy="68.300" r="14.500" fill="#fff"/><circle cx="42.100" cy="68.300" r="11.500" fill="#1a73e8"/><path d="M67 83.800H72.100L68.300 86.600Z" fill="#202124"/><rect x="32" y="65.600" width="40.100" height="18.300" fill="#3c4043"/><text x="52.100" y="80.500" text-anchor="middle" font-family="Liberation Sans, sans-serif" font-weight="bold" font-size="14.500" fill="#fff" textLength="31.800" lengthAdjust="spacingAndGlyphs">PDF</text></svg>
<div class="lbl" style="left:1613.5px;top:507px;line-height:21px;height:21px;letter-spacing:0.002px;margin-left:0.00px">campusmonk-in-</div><div class="lbl" style="left:1613.5px;top:527px;line-height:21px;height:21px;letter-spacing:-0.019px;margin-left:-0.01px">Cloud</div>
<svg style="left:1780.8px;top:391.55px" width="85" height="111" viewBox="0 0 85 111"><defs><linearGradient id="pg21" x1="0" y1="0" x2="0" y2="1"><stop offset="0" stop-color="#f8f8f8"/><stop offset="1" stop-color="#ededed"/></linearGradient><linearGradient id="pf22" x1="0" y1="1" x2="1" y2="0"><stop offset="0" stop-color="#cfcfcf"/><stop offset=".45" stop-color="#f1f1f1"/><stop offset="1" stop-color="#fbfbfb"/></linearGradient></defs><path d="M3 0H53.300L84.300 31V108A3 3 0 0 1 81.300 111H3A3 3 0 0 1 0 108V3A3 3 0 0 1 3 0Z" fill="url(#pg21)"/><path d="M53.300 0L84.300 31H58.300A5 5 0 0 1 53.300 26Z" fill="url(#pf22)"/><circle cx="42.100" cy="68.300" r="29.800" fill="#fff"/><path d="M42.10 53.80L68.59 53.80A30.2 30.2 0 0 0 16.30 52.61L29.54 75.55A14.5 14.5 0 0 1 42.10 53.80Z" fill="#ea4335"/><path d="M29.54 75.55L16.30 52.61A30.2 30.2 0 0 0 41.41 98.49L54.66 75.55A14.5 14.5 0 0 1 29.54 75.55Z" fill="#34a853"/><path d="M54.66 75.55L41.41 98.49A30.2 30.2 0 0 0 68.59 53.80L42.10 53.80A14.5 14.5 0 0 1 54.66 75.55Z" fill="#fbbc04"/><circle cx="42.100" cy="68.300" r="14.500" fill="#fff"/><circle cx="42.100" cy="68.300" r="11.500" fill="#1a73e8"/><path d="M67 83.800H72.100L68.300 86.600Z" fill="#202124"/><rect x="32" y="65.600" width="40.100" height="18.300" fill="#3c4043"/><text x="52.100" y="80.500" text-anchor="middle" font-family="Liberation Sans, sans-serif" font-weight="bold" font-size="14.500" fill="#fff" textLength="31.800" lengthAdjust="spacingAndGlyphs">PDF</text></svg>
<div class="lbl" style="left:1753.5px;top:507px;line-height:21px;height:21px;letter-spacing:0.394px;margin-left:0.20px">oopm</div>
<svg style="left:0;top:0" width="1919" height="977" viewBox="0 0 1919 977"><g transform="matrix(1 0 0 1.017 0 -11.400)"><path d="M245 591L302 586Q308 585.500 313 589L326 598Q331 601.500 331 608V668Q331 677 322 678L259 684.500Q252 685 247.500 680L238 668Q235 664 235 659V603Q235 592 245 591Z" fill="#fff"/><path d="M246.500 596L301 591.500Q306 591 310 594L322 602.500Q326 605 326 610V666Q326 672.500 320 673.200L259.500 679.500Q254.500 680 251.500 676L242.500 664.500Q240 661.500 240 658V603.500Q240 596.600 246.500 596Z" fill="#000"/><path d="M248 598.500L299.500 594.500Q303 594.200 306 596.200L315 602.500L262 607Q258.500 607.300 255.500 605Z" fill="#fff"/><path d="M259 614Q259 611.500 261.500 611.200L318 606.500Q321 606.300 321 609V664Q321 667.500 318 667.800L262 673.500Q259 673.800 259 671Z" fill="#fff"/><text x="290" y="664" text-anchor="middle" font-family="Liberation Serif, serif" font-weight="bold" font-size="67" fill="#000" stroke="#000" stroke-width="1.200" transform="rotate(-4 290 640)" textLength="47" lengthAdjust="spacingAndGlyphs">N</text></g></svg>
<div class="lbl" style="left:213.5px;top:695px;line-height:21px;height:21px;letter-spacing:0.064px;margin-left:0.03px">Notion Setup</div><div class="lbl" style="left:213.5px;top:715px;line-height:21px;height:21px;letter-spacing:-0.752px;margin-left:-0.38px">4.2.0</div>
<svg style="left:0;top:0" width="1919" height="977" viewBox="0 0 1919 977"><defs><clipPath id="gitc"><rect x="-45.200" y="-45.200" width="90.400" height="90.400" rx="7"/></clipPath><linearGradient id="gr" x1="0" y1="0" x2="1" y2="1"><stop offset="0" stop-color="#f87e7e"/><stop offset="1" stop-color="#d86c6c"/></linearGradient><linearGradient id="gy" x1="0" y1="0" x2="1" y2="1"><stop offset="0" stop-color="#fce180"/><stop offset="1" stop-color="#e0c668"/></linearGradient></defs><g transform="translate(424 635) rotate(45)"><g clip-path="url(#gitc)"><rect x="-46" y="-46" width="43.900" height="43.900" fill="url(#gr)"/><rect x="2.100" y="-46" width="43.900" height="43.900" fill="#6cae4e"/><rect x="-46" y="2.100" width="43.900" height="43.900" fill="#7fb0f8"/><rect x="2.100" y="2.100" width="43.900" height="43.900" fill="url(#gy)"/></g></g><g stroke="#191919" fill="#191919"><path d="M424 612V662" stroke-width="6.500" fill="none"/><path d="M403 589L452 638" stroke-width="6" fill="none"/><circle cx="422.300" cy="635" r="6.200"/><circle cx="424" cy="611.500" r="9"/><circle cx="424" cy="662" r="9"/><circle cx="450" cy="636" r="9"/></g></svg>
<div class="t" style="left:369.2px;top:695px;line-height:21px;height:21px;letter-spacing:-0.465px">Git-2.47.0-64-bit</div>
<svg style="left:1487px;top:594px" width="112" height="100" viewBox="0 0 112 100"><defs><linearGradient id="xk27" x1="0" y1="0" x2="0" y2="1"><stop offset="0" stop-color="#ffffff"/><stop offset="1" stop-color="#ebebeb"/></linearGradient><linearGradient id="xa23" x1="0" y1="0" x2="1" y2="1"><stop offset="0" stop-color="#c7ea7e"/><stop offset=".6" stop-color="#5fc552"/><stop offset="1" stop-color="#4cb548"/></linearGradient><linearGradient id="xb24" x1="0" y1="0" x2="1" y2="1"><stop offset="0" stop-color="#155c25"/><stop offset="1" stop-color="#3fa03f"/></linearGradient><linearGradient id="xc25" x1="0" y1="0" x2="1" y2="1"><stop offset="0" stop-color="#9be87a"/><stop offset="1" stop-color="#6fdc68"/></linearGradient><linearGradient id="xh28" x1="0" y1="0" x2="1" y2="1"><stop offset="0" stop-color="#5cb35a"/><stop offset="1" stop-color="#3f9a46"/></linearGradient><linearGradient id="xe26" x1="0" y1="0" x2="1" y2="1"><stop offset="0" stop-color="#27a567"/><stop offset=".5" stop-color="#12784a"/><stop offset="1" stop-color="#084c2c"/></linearGradient></defs><clipPath id="xp29"><path d="M10 .5H84A23.5 23.5 0 0 1 107.5 24V75.5A6 6 0 0 1 101.5 81.5H10A6 6 0 0 1 4.500 75.5V6.500A6 6 0 0 1 10 .5Z"/></clipPath><path d="M10 .5H84A23.5 23.5 0 0 1 107.5 24V75.5A6 6 0 0 1 101.5 81.5H10A6 6 0 0 1 4.500 75.5V6.500A6 6 0 0 1 10 .5Z" fill="url(#xk27)" stroke="#989898" stroke-width="1.700"/><path d="M39 13H75A4 4 0 0 1 79 17V65A4 4 0 0 1 75 69H56V50H33V19A6 6 0 0 1 39 13Z" fill="url(#xa23)"/><path d="M56 31H79V65A4 4 0 0 1 75 69H56Z" fill="url(#xb24)"/><path d="M33 36Q33 31 38 31H56V45Q56 50 51 50H33Z" fill="url(#xh28)"/><path d="M56 13H75A4 4 0 0 1 79 17V31H60A4 4 0 0 1 56 27Z" fill="url(#xc25)"/><rect x="-1.6" y="44.800" width="54" height="54" rx="10.500" fill="#f6f6f6" clip-path="url(#xp29)"/><rect x="0" y="48" width="49" height="48.6" rx="8" fill="url(#xe26)"/><text x="24.5" y="85.4" text-anchor="middle" font-family="Liberation Sans, sans-serif" font-weight="bold" font-size="36.5" fill="#fff" stroke="#fff" stroke-width=".9" textLength="26" lengthAdjust="spacingAndGlyphs">X</text></svg>
<div class="t" style="left:1499.1px;top:695px;line-height:21px;height:21px">SQL DataBase</div>
<div class="t" style="left:1506.4px;top:715px;line-height:21px;height:21px">DBMS Expert</div>
<svg style="left:1627px;top:594px" width="112" height="100" viewBox="0 0 112 100"><defs><linearGradient id="xk34" x1="0" y1="0" x2="0" y2="1"><stop offset="0" stop-color="#ffffff"/><stop offset="1" stop-color="#ebebeb"/></linearGradient><linearGradient id="xa30" x1="0" y1="0" x2="1" y2="1"><stop offset="0" stop-color="#c7ea7e"/><stop offset=".6" stop-color="#5fc552"/><stop offset="1" stop-color="#4cb548"/></linearGradient><linearGradient id="xb31" x1="0" y1="0" x2="1" y2="1"><stop offset="0" stop-color="#155c25"/><stop offset="1" stop-color="#3fa03f"/></linearGradient><linearGradient id="xc32" x1="0" y1="0" x2="1" y2="1"><stop offset="0" stop-color="#9be87a"/><stop offset="1" stop-color="#6fdc68"/></linearGradient><linearGradient id="xh35" x1="0" y1="0" x2="1" y2="1"><stop offset="0" stop-color="#5cb35a"/><stop offset="1" stop-color="#3f9a46"/></linearGradient><linearGradient id="xe33" x1="0" y1="0" x2="1" y2="1"><stop offset="0" stop-color="#27a567"/><stop offset=".5" stop-color="#12784a"/><stop offset="1" stop-color="#084c2c"/></linearGradient></defs><clipPath id="xp36"><path d="M10 .5H84A23.5 23.5 0 0 1 107.5 24V75.5A6 6 0 0 1 101.5 81.5H10A6 6 0 0 1 4.500 75.5V6.500A6 6 0 0 1 10 .5Z"/></clipPath><path d="M10 .5H84A23.5 23.5 0 0 1 107.5 24V75.5A6 6 0 0 1 101.5 81.5H10A6 6 0 0 1 4.500 75.5V6.500A6 6 0 0 1 10 .5Z" fill="url(#xk34)" stroke="#989898" stroke-width="1.700"/><path d="M39 13H75A4 4 0 0 1 79 17V65A4 4 0 0 1 75 69H56V50H33V19A6 6 0 0 1 39 13Z" fill="url(#xa30)"/><path d="M56 31H79V65A4 4 0 0 1 75 69H56Z" fill="url(#xb31)"/><path d="M33 36Q33 31 38 31H56V45Q56 50 51 50H33Z" fill="url(#xh35)"/><path d="M56 13H75A4 4 0 0 1 79 17V31H60A4 4 0 0 1 56 27Z" fill="url(#xc32)"/><rect x="-1.6" y="44.800" width="54" height="54" rx="10.500" fill="#f6f6f6" clip-path="url(#xp36)"/><rect x="0" y="48" width="49" height="48.6" rx="8" fill="url(#xe33)"/><text x="24.5" y="85.4" text-anchor="middle" font-family="Liberation Sans, sans-serif" font-weight="bold" font-size="36.5" fill="#fff" stroke="#fff" stroke-width=".9" textLength="26" lengthAdjust="spacingAndGlyphs">X</text></svg>
<div class="lbl" style="left:1613.5px;top:695px;line-height:21px;height:21px;letter-spacing:0.379px;margin-left:0.19px">Wipro-DotNet</div><div class="lbl" style="left:1613.5px;top:715px;line-height:21px;height:21px;letter-spacing:-0.478px;margin-left:-0.24px">(1)</div>
<svg style="left:1767px;top:594px" width="112" height="100" viewBox="0 0 112 100"><defs><linearGradient id="xk41" x1="0" y1="0" x2="0" y2="1"><stop offset="0" stop-color="#ffffff"/><stop offset="1" stop-color="#ebebeb"/></linearGradient><linearGradient id="xa37" x1="0" y1="0" x2="1" y2="1"><stop offset="0" stop-color="#c7ea7e"/><stop offset=".6" stop-color="#5fc552"/><stop offset="1" stop-color="#4cb548"/></linearGradient><linearGradient id="xb38" x1="0" y1="0" x2="1" y2="1"><stop offset="0" stop-color="#155c25"/><stop offset="1" stop-color="#3fa03f"/></linearGradient><linearGradient id="xc39" x1="0" y1="0" x2="1" y2="1"><stop offset="0" stop-color="#9be87a"/><stop offset="1" stop-color="#6fdc68"/></linearGradient><linearGradient id="xh42" x1="0" y1="0" x2="1" y2="1"><stop offset="0" stop-color="#5cb35a"/><stop offset="1" stop-color="#3f9a46"/></linearGradient><linearGradient id="xe40" x1="0" y1="0" x2="1" y2="1"><stop offset="0" stop-color="#27a567"/><stop offset=".5" stop-color="#12784a"/><stop offset="1" stop-color="#084c2c"/></linearGradient></defs><clipPath id="xp43"><path d="M10 .5H84A23.5 23.5 0 0 1 107.5 24V75.5A6 6 0 0 1 101.5 81.5H10A6 6 0 0 1 4.500 75.5V6.500A6 6 0 0 1 10 .5Z"/></clipPath><path d="M10 .5H84A23.5 23.5 0 0 1 107.5 24V75.5A6 6 0 0 1 101.5 81.5H10A6 6 0 0 1 4.500 75.5V6.500A6 6 0 0 1 10 .5Z" fill="url(#xk41)" stroke="#989898" stroke-width="1.700"/><path d="M39 13H75A4 4 0 0 1 79 17V65A4 4 0 0 1 75 69H56V50H33V19A6 6 0 0 1 39 13Z" fill="url(#xa37)"/><path d="M56 31H79V65A4 4 0 0 1 75 69H56Z" fill="url(#xb38)"/><path d="M33 36Q33 31 38 31H56V45Q56 50 51 50H33Z" fill="url(#xh42)"/><path d="M56 13H75A4 4 0 0 1 79 17V31H60A4 4 0 0 1 56 27Z" fill="url(#xc39)"/><rect x="-1.6" y="44.800" width="54" height="54" rx="10.500" fill="#f6f6f6" clip-path="url(#xp43)"/><rect x="0" y="48" width="49" height="48.6" rx="8" fill="url(#xe40)"/><text x="24.5" y="85.4" text-anchor="middle" font-family="Liberation Sans, sans-serif" font-weight="bold" font-size="36.5" fill="#fff" stroke="#fff" stroke-width=".9" textLength="26" lengthAdjust="spacingAndGlyphs">X</text></svg>
<div class="lbl" style="left:1753.5px;top:695px;line-height:21px;height:21px;letter-spacing:0.379px;margin-left:0.19px">Wipro-DotNet</div>
<svg style="left:240.8px;top:767.40px" width="85" height="111" viewBox="0 0 85 111"><defs><linearGradient id="pg44" x1="0" y1="0" x2="0" y2="1"><stop offset="0" stop-color="#f8f8f8"/><stop offset="1" stop-color="#ededed"/></linearGradient><linearGradient id="pf45" x1="0" y1="1" x2="1" y2="0"><stop offset="0" stop-color="#cfcfcf"/><stop offset=".45" stop-color="#f1f1f1"/><stop offset="1" stop-color="#fbfbfb"/></linearGradient></defs><path d="M3 0H53.300L84.300 31V108A3 3 0 0 1 81.300 111H3A3 3 0 0 1 0 108V3A3 3 0 0 1 3 0Z" fill="url(#pg44)"/><path d="M53.300 0L84.300 31H58.300A5 5 0 0 1 53.300 26Z" fill="url(#pf45)"/><circle cx="42.100" cy="68.300" r="29.800" fill="#fff"/><path d="M42.10 53.80L68.59 53.80A30.2 30.2 0 0 0 16.30 52.61L29.54 75.55A14.5 14.5 0 0 1 42.10 53.80Z" fill="#ea4335"/><path d="M29.54 75.55L16.30 52.61A30.2 30.2 0 0 0 41.41 98.49L54.66 75.55A14.5 14.5 0 0 1 29.54 75.55Z" fill="#34a853"/><path d="M54.66 75.55L41.41 98.49A30.2 30.2 0 0 0 68.59 53.80L42.10 53.80A14.5 14.5 0 0 1 54.66 75.55Z" fill="#fbbc04"/><circle cx="42.100" cy="68.300" r="14.500" fill="#fff"/><circle cx="42.100" cy="68.300" r="11.500" fill="#1a73e8"/><path d="M67 83.800H72.100L68.300 86.600Z" fill="#202124"/><rect x="32" y="65.600" width="40.100" height="18.300" fill="#3c4043"/><text x="52.100" y="80.500" text-anchor="middle" font-family="Liberation Sans, sans-serif" font-weight="bold" font-size="14.500" fill="#fff" textLength="31.800" lengthAdjust="spacingAndGlyphs">PDF</text></svg>
<div class="lbl" style="left:213.5px;top:883px;line-height:21px;height:21px;letter-spacing:-0.112px;margin-left:-0.06px">DSA  paper</div><div class="lbl" style="left:213.5px;top:903px;line-height:21px;height:21px;letter-spacing:-0.219px;margin-left:-0.11px">previous year</div>
<svg style="left:368px;top:779px" width="110" height="84" viewBox="0 0 110 84"><defs><linearGradient id="za46" x1="0" y1="0" x2="1" y2="1"><stop offset="0" stop-color="#ffeaa6"/><stop offset=".5" stop-color="#f5d468"/><stop offset="1" stop-color="#dcae34"/></linearGradient><linearGradient id="zb47" x1="0" y1="0" x2="1" y2="1"><stop offset="0" stop-color="#fdc42a"/><stop offset="1" stop-color="#eeaf1c"/></linearGradient><linearGradient id="zc48" x1="0" y1="0" x2="1" y2="0"><stop offset="0" stop-color="#e6e6e6"/><stop offset=".6" stop-color="#b4b4b4"/><stop offset="1" stop-color="#9c9c9c"/></linearGradient><linearGradient id="zd49" x1="0" y1="0" x2="0" y2="1"><stop offset="0" stop-color="#f2f2f2"/><stop offset="1" stop-color="#b0b0b0"/></linearGradient></defs><path d="M6.500 0H35Q38.500 0 41 2.500L46.500 8Q49 10.500 52.500 10.500H102.700A5 5 0 0 1 107.700 15.500V60H2.500V4A4 4 0 0 1 6.500 0Z" fill="url(#zb47)"/><path d="M6.500 19H35.500Q39.500 19 42.500 16.500L46 14Q49 12.500 53 12.500H103.700A4 4 0 0 1 107.700 16.500V77.600A5 5 0 0 1 102.700 82.600H7.500A5 5 0 0 1 2.500 77.600V23A4 4 0 0 1 6.500 19Z" fill="url(#za46)"/><path d="M2.500 76V77.600A5 5 0 0 0 7.500 82.600H102.700A5 5 0 0 0 107.700 77.600V76A5 5 0 0 1 102.700 81H7.500A5 5 0 0 1 2.500 76Z" fill="#dfa51c"/><rect x="2.500" y="46.800" width="105.200" height="8.600" fill="#8f6c0c"/><path d="M20.4 47.300H22.8L22.4 52.500H20.8ZM23.7 49.600H25.3L25.7 54.900H23.3ZM26.3 47.300H28.7L28.3 52.500H26.7ZM29.6 49.600H31.2L31.6 54.900H29.2ZM32.1 47.300H34.5L34.1 52.500H32.5ZM35.4 49.600H37.0L37.4 54.900H35.0ZM38.0 47.300H40.4L40.0 52.500H38.4ZM41.3 49.600H42.9L43.3 54.900H40.9ZM43.8 47.300H46.2L45.8 52.500H44.2ZM47.2 49.600H48.8L49.2 54.900H46.8ZM49.7 47.300H52.1L51.7 52.500H50.1ZM53.0 49.600H54.6L55.0 54.900H52.6ZM55.6 47.300H58.0L57.6 52.500H56.0ZM58.9 49.600H60.5L60.9 54.900H58.5ZM61.4 47.300H63.8L63.4 52.500H61.8ZM64.8 49.600H66.3L66.8 54.900H64.3ZM67.3 47.300H69.7L69.3 52.500H67.7ZM70.6 49.600H72.2L72.6 54.900H70.2ZM73.1 47.300H75.5L75.1 52.500H73.5ZM76.5 49.600H78.1L78.5 54.900H76.1ZM79.0 47.300H81.4L81.0 52.500H79.4ZM82.3 49.600H83.9L84.3 54.900H81.9ZM84.9 47.300H87.3L86.9 52.500H85.3ZM88.2 49.600H89.8L90.2 54.900H87.8ZM90.7 47.300H93.1L92.7 52.500H91.1ZM94.1 49.600H95.7L96.1 54.900H93.7ZM96.6 47.300H99.0L98.6 52.500H97.0Z" fill="#ececec"/><rect x="1.200" y="44.300" width="17.800" height="13.600" rx="4" fill="url(#zc48)"/><path d="M4 50.500H12M9 48H18M9 53H18" stroke="#f4f4f4" stroke-width="1.100" fill="none"/><rect x="98.700" y="46.800" width="8.600" height="8.600" rx="1" fill="#b9b9b9"/><path d="M100 51H107" stroke="#dcdcdc" stroke-width="1.200"/><rect x="9.200" y="52" width="10.500" height="25.800" rx="1.200" fill="url(#zd49)" stroke="#9a9a9a" stroke-width=".6"/><rect x="11.400" y="69.500" width="6" height="5.600" fill="#f7d868" stroke="#d8d8d8" stroke-width=".8"/></svg>
<div class="lbl" style="left:353.5px;top:883px;line-height:21px;height:21px;letter-spacing:-0.075px;margin-left:-0.04px">Space Portfolio</div><div class="lbl" style="left:353.5px;top:903px;line-height:21px;height:21px;letter-spacing:-0.417px;margin-left:-0.21px">Assets-20250524</div><div class="lbl" style="left:353.5px;top:923px;line-height:21px;height:21px;letter-spacing:-0.288px;margin-left:-0.14px">T170115Z-1-001</div>
<svg style="left:520.8px;top:767.40px" width="85" height="111" viewBox="0 0 85 111"><defs><linearGradient id="pg50" x1="0" y1="0" x2="0" y2="1"><stop offset="0" stop-color="#f8f8f8"/><stop offset="1" stop-color="#ededed"/></linearGradient><linearGradient id="pf51" x1="0" y1="1" x2="1" y2="0"><stop offset="0" stop-color="#cfcfcf"/><stop offset=".45" stop-color="#f1f1f1"/><stop offset="1" stop-color="#fbfbfb"/></linearGradient></defs><path d="M3 0H53.300L84.300 31V108A3 3 0 0 1 81.300 111H3A3 3 0 0 1 0 108V3A3 3 0 0 1 3 0Z" fill="url(#pg50)"/><path d="M53.300 0L84.300 31H58.300A5 5 0 0 1 53.300 26Z" fill="url(#pf51)"/><circle cx="42.100" cy="68.300" r="29.800" fill="#fff"/><path d="M42.10 53.80L68.59 53.80A30.2 30.2 0 0 0 16.30 52.61L29.54 75.55A14.5 14.5 0 0 1 42.10 53.80Z" fill="#ea4335"/><path d="M29.54 75.55L16.30 52.61A30.2 30.2 0 0 0 41.41 98.49L54.66 75.55A14.5 14.5 0 0 1 29.54 75.55Z" fill="#34a853"/><path d="M54.66 75.55L41.41 98.49A30.2 30.2 0 0 0 68.59 53.80L42.10 53.80A14.5 14.5 0 0 1 54.66 75.55Z" fill="#fbbc04"/><circle cx="42.100" cy="68.300" r="14.500" fill="#fff"/><circle cx="42.100" cy="68.300" r="11.500" fill="#1a73e8"/><path d="M67 83.800H72.100L68.300 86.600Z" fill="#202124"/><rect x="32" y="65.600" width="40.100" height="18.300" fill="#3c4043"/><text x="52.100" y="80.500" text-anchor="middle" font-family="Liberation Sans, sans-serif" font-weight="bold" font-size="14.500" fill="#fff" textLength="31.800" lengthAdjust="spacingAndGlyphs">PDF</text></svg>
<div class="lbl" style="left:493.5px;top:883px;line-height:21px;height:21px;letter-spacing:-0.772px;margin-left:-0.39px">SE.notes</div>
<svg style="left:660.8px;top:767.40px" width="85" height="111" viewBox="0 0 85 111"><defs><linearGradient id="pg52" x1="0" y1="0" x2="0" y2="1"><stop offset="0" stop-color="#f8f8f8"/><stop offset="1" stop-color="#ededed"/></linearGradient><linearGradient id="pf53" x1="0" y1="1" x2="1" y2="0"><stop offset="0" stop-color="#cfcfcf"/><stop offset=".45" stop-color="#f1f1f1"/><stop offset="1" stop-color="#fbfbfb"/></linearGradient></defs><path d="M3 0H53.300L84.300 31V108A3 3 0 0 1 81.300 111H3A3 3 0 0 1 0 108V3A3 3 0 0 1 3 0Z" fill="url(#pg52)"/><path d="M53.300 0L84.300 31H58.300A5 5 0 0 1 53.300 26Z" fill="url(#pf53)"/><circle cx="42.100" cy="68.300" r="29.800" fill="#fff"/><path d="M42.10 53.80L68.59 53.80A30.2 30.2 0 0 0 16.30 52.61L29.54 75.55A14.5 14.5 0 0 1 42.10 53.80Z" fill="#ea4335"/><path d="M29.54 75.55L16.30 52.61A30.2 30.2 0 0 0 41.41 98.49L54.66 75.55A14.5 14.5 0 0 1 29.54 75.55Z" fill="#34a853"/><path d="M54.66 75.55L41.41 98.49A30.2 30.2 0 0 0 68.59 53.80L42.10 53.80A14.5 14.5 0 0 1 54.66 75.55Z" fill="#fbbc04"/><circle cx="42.100" cy="68.300" r="14.500" fill="#fff"/><circle cx="42.100" cy="68.300" r="11.500" fill="#1a73e8"/><path d="M67 83.800H72.100L68.300 86.600Z" fill="#202124"/><rect x="32" y="65.600" width="40.100" height="18.300" fill="#3c4043"/><text x="52.100" y="80.500" text-anchor="middle" font-family="Liberation Sans, sans-serif" font-weight="bold" font-size="14.500" fill="#fff" textLength="31.800" lengthAdjust="spacingAndGlyphs">PDF</text></svg>
<div class="lbl" style="left:633.5px;top:883px;line-height:21px;height:21px;letter-spacing:0.094px;margin-left:0.05px">imgtopdf_06122</div><div class="lbl" style="left:633.5px;top:903px;line-height:21px;height:21px;letter-spacing:-0.368px;margin-left:-0.18px">31938049</div>
<svg style="left:788px;top:779px" width="110" height="84" viewBox="0 0 110 84"><defs><linearGradient id="za54" x1="0" y1="0" x2="1" y2="1"><stop offset="0" stop-color="#ffeaa6"/><stop offset=".5" stop-color="#f5d468"/><stop offset="1" stop-color="#dcae34"/></linearGradient><linearGradient id="zb55" x1="0" y1="0" x2="1" y2="1"><stop offset="0" stop-color="#fdc42a"/><stop offset="1" stop-color="#eeaf1c"/></linearGradient><linearGradient id="zc56" x1="0" y1="0" x2="1" y2="0"><stop offset="0" stop-color="#e6e6e6"/><stop offset=".6" stop-color="#b4b4b4"/><stop offset="1" stop-color="#9c9c9c"/></linearGradient><linearGradient id="zd57" x1="0" y1="0" x2="0" y2="1"><stop offset="0" stop-color="#f2f2f2"/><stop offset="1" stop-color="#b0b0b0"/></linearGradient></defs><path d="M6.500 0H35Q38.500 0 41 2.500L46.500 8Q49 10.500 52.500 10.500H102.700A5 5 0 0 1 107.700 15.500V60H2.500V4A4 4 0 0 1 6.500 0Z" fill="url(#zb55)"/><path d="M6.500 19H35.500Q39.500 19 42.500 16.500L46 14Q49 12.500 53 12.500H103.700A4 4 0 0 1 107.700 16.500V77.600A5 5 0 0 1 102.700 82.600H7.500A5 5 0 0 1 2.500 77.600V23A4 4 0 0 1 6.500 19Z" fill="url(#za54)"/><path d="M2.500 76V77.600A5 5 0 0 0 7.500 82.600H102.700A5 5 0 0 0 107.700 77.600V76A5 5 0 0 1 102.700 81H7.500A5 5 0 0 1 2.500 76Z" fill="#dfa51c"/><rect x="2.500" y="46.800" width="105.200" height="8.600" fill="#8f6c0c"/><path d="M20.4 47.300H22.8L22.4 52.500H20.8ZM23.7 49.600H25.3L25.7 54.900H23.3ZM26.3 47.300H28.7L28.3 52.500H26.7ZM29.6 49.600H31.2L31.6 54.900H29.2ZM32.1 47.300H34.5L34.1 52.500H32.5ZM35.4 49.600H37.0L37.4 54.900H35.0ZM38.0 47.300H40.4L40.0 52.500H38.4ZM41.3 49.600H42.9L43.3 54.900H40.9ZM43.8 47.300H46.2L45.8 52.500H44.2ZM47.2 49.600H48.8L49.2 54.900H46.8ZM49.7 47.300H52.1L51.7 52.500H50.1ZM53.0 49.600H54.6L55.0 54.900H52.6ZM55.6 47.300H58.0L57.6 52.500H56.0ZM58.9 49.600H60.5L60.9 54.900H58.5ZM61.4 47.300H63.8L63.4 52.500H61.8ZM64.8 49.600H66.3L66.8 54.900H64.3ZM67.3 47.300H69.7L69.3 52.500H67.7ZM70.6 49.600H72.2L72.6 54.900H70.2ZM73.1 47.300H75.5L75.1 52.500H73.5ZM76.5 49.600H78.1L78.5 54.900H76.1ZM79.0 47.300H81.4L81.0 52.500H79.4ZM82.3 49.600H83.9L84.3 54.900H81.9ZM84.9 47.300H87.3L86.9 52.500H85.3ZM88.2 49.600H89.8L90.2 54.900H87.8ZM90.7 47.300H93.1L92.7 52.500H91.1ZM94.1 49.600H95.7L96.1 54.900H93.7ZM96.6 47.300H99.0L98.6 52.500H97.0Z" fill="#ececec"/><rect x="1.200" y="44.300" width="17.800" height="13.600" rx="4" fill="url(#zc56)"/><path d="M4 50.500H12M9 48H18M9 53H18" stroke="#f4f4f4" stroke-width="1.100" fill="none"/><rect x="98.700" y="46.800" width="8.600" height="8.600" rx="1" fill="#b9b9b9"/><path d="M100 51H107" stroke="#dcdcdc" stroke-width="1.200"/><rect x="9.200" y="52" width="10.500" height="25.800" rx="1.200" fill="url(#zd57)" stroke="#9a9a9a" stroke-width=".6"/><rect x="11.400" y="69.500" width="6" height="5.600" fill="#f7d868" stroke="#d8d8d8" stroke-width=".8"/></svg>
<div class="lbl" style="left:773.5px;top:883px;line-height:21px;height:21px;letter-spacing:-0.040px;margin-left:-0.02px">ecommerce</div><div class="lbl" style="left:773.5px;top:903px;line-height:21px;height:21px;letter-spacing:-0.114px;margin-left:-0.06px">website 100</div>
<svg style="left:928px;top:779px" width="110" height="84" viewBox="0 0 110 84"><defs><linearGradient id="za58" x1="0" y1="0" x2="1" y2="1"><stop offset="0" stop-color="#ffeaa6"/><stop offset=".5" stop-color="#f5d468"/><stop offset="1" stop-color="#dcae34"/></linearGradient><linearGradient id="zb59" x1="0" y1="0" x2="1" y2="1"><stop offset="0" stop-color="#fdc42a"/><stop offset="1" stop-color="#eeaf1c"/></linearGradient><linearGradient id="zc60" x1="0" y1="0" x2="1" y2="0"><stop offset="0" stop-color="#e6e6e6"/><stop offset=".6" stop-color="#b4b4b4"/><stop offset="1" stop-color="#9c9c9c"/></linearGradient><linearGradient id="zd61" x1="0" y1="0" x2="0" y2="1"><stop offset="0" stop-color="#f2f2f2"/><stop offset="1" stop-color="#b0b0b0"/></linearGradient></defs><path d="M6.500 0H35Q38.500 0 41 2.500L46.500 8Q49 10.500 52.500 10.500H102.700A5 5 0 0 1 107.700 15.500V60H2.500V4A4 4 0 0 1 6.500 0Z" fill="url(#zb59)"/><path d="M6.500 19H35.500Q39.500 19 42.500 16.500L46 14Q49 12.500 53 12.500H103.700A4 4 0 0 1 107.700 16.500V77.600A5 5 0 0 1 102.700 82.600H7.500A5 5 0 0 1 2.500 77.600V23A4 4 0 0 1 6.500 19Z" fill="url(#za58)"/><path d="M2.500 76V77.600A5 5 0 0 0 7.500 82.600H102.700A5 5 0 0 0 107.700 77.600V76A5 5 0 0 1 102.700 81H7.500A5 5 0 0 1 2.500 76Z" fill="#dfa51c"/><rect x="2.500" y="46.800" width="105.200" height="8.600" fill="#8f6c0c"/><path d="M20.4 47.300H22.8L22.4 52.500H20.8ZM23.7 49.600H25.3L25.7 54.900H23.3ZM26.3 47.300H28.7L28.3 52.500H26.7ZM29.6 49.600H31.2L31.6 54.900H29.2ZM32.1 47.300H34.5L34.1 52.500H32.5ZM35.4 49.600H37.0L37.4 54.900H35.0ZM38.0 47.300H40.4L40.0 52.500H38.4ZM41.3 49.600H42.9L43.3 54.900H40.9ZM43.8 47.300H46.2L45.8 52.500H44.2ZM47.2 49.600H48.8L49.2 54.900H46.8ZM49.7 47.300H52.1L51.7 52.500H50.1ZM53.0 49.600H54.6L55.0 54.900H52.6ZM55.6 47.300H58.0L57.6 52.500H56.0ZM58.9 49.600H60.5L60.9 54.900H58.5ZM61.4 47.300H63.8L63.4 52.500H61.8ZM64.8 49.600H66.3L66.8 54.900H64.3ZM67.3 47.300H69.7L69.3 52.500H67.7ZM70.6 49.600H72.2L72.6 54.900H70.2ZM73.1 47.300H75.5L75.1 52.500H73.5ZM76.5 49.600H78.1L78.5 54.900H76.1ZM79.0 47.300H81.4L81.0 52.500H79.4ZM82.3 49.600H83.9L84.3 54.900H81.9ZM84.9 47.300H87.3L86.9 52.500H85.3ZM88.2 49.600H89.8L90.2 54.900H87.8ZM90.7 47.300H93.1L92.7 52.500H91.1ZM94.1 49.600H95.7L96.1 54.900H93.7ZM96.6 47.300H99.0L98.6 52.500H97.0Z" fill="#ececec"/><rect x="1.200" y="44.300" width="17.800" height="13.600" rx="4" fill="url(#zc60)"/><path d="M4 50.500H12M9 48H18M9 53H18" stroke="#f4f4f4" stroke-width="1.100" fill="none"/><rect x="98.700" y="46.800" width="8.600" height="8.600" rx="1" fill="#b9b9b9"/><path d="M100 51H107" stroke="#dcdcdc" stroke-width="1.200"/><rect x="9.200" y="52" width="10.500" height="25.800" rx="1.200" fill="url(#zd61)" stroke="#9a9a9a" stroke-width=".6"/><rect x="11.400" y="69.500" width="6" height="5.600" fill="#f7d868" stroke="#d8d8d8" stroke-width=".8"/></svg>
<div class="lbl" style="left:913.5px;top:883px;line-height:21px;height:21px;letter-spacing:-0.084px;margin-left:-0.04px">ecommerce</div><div class="lbl" style="left:913.5px;top:903px;line-height:21px;height:21px;letter-spacing:0.027px;margin-left:0.01px">website zip</div>
<svg style="left:1080.8px;top:767.40px" width="85" height="111" viewBox="0 0 85 111"><defs><linearGradient id="pg62" x1="0" y1="0" x2="0" y2="1"><stop offset="0" stop-color="#f8f8f8"/><stop offset="1" stop-color="#ededed"/></linearGradient><linearGradient id="pf63" x1="0" y1="1" x2="1" y2="0"><stop offset="0" stop-color="#cfcfcf"/><stop offset=".45" stop-color="#f1f1f1"/><stop offset="1" stop-color="#fbfbfb"/></linearGradient></defs><path d="M3 0H53.300L84.300 31V108A3 3 0 0 1 81.300 111H3A3 3 0 0 1 0 108V3A3 3 0 0 1 3 0Z" fill="url(#pg62)"/><path d="M53.300 0L84.300 31H58.300A5 5 0 0 1 53.300 26Z" fill="url(#pf63)"/><circle cx="42.100" cy="68.300" r="29.800" fill="#fff"/><path d="M42.10 53.80L68.59 53.80A30.2 30.2 0 0 0 16.30 52.61L29.54 75.55A14.5 14.5 0 0 1 42.10 53.80Z" fill="#ea4335"/><path d="M29.54 75.55L16.30 52.61A30.2 30.2 0 0 0 41.41 98.49L54.66 75.55A14.5 14.5 0 0 1 29.54 75.55Z" fill="#34a853"/><path d="M54.66 75.55L41.41 98.49A30.2 30.2 0 0 0 68.59 53.80L42.10 53.80A14.5 14.5 0 0 1 54.66 75.55Z" fill="#fbbc04"/><circle cx="42.100" cy="68.300" r="14.500" fill="#fff"/><circle cx="42.100" cy="68.300" r="11.500" fill="#1a73e8"/><path d="M67 83.800H72.100L68.300 86.600Z" fill="#202124"/><rect x="32" y="65.600" width="40.100" height="18.300" fill="#3c4043"/><text x="52.100" y="80.500" text-anchor="middle" font-family="Liberation Sans, sans-serif" font-weight="bold" font-size="14.500" fill="#fff" textLength="31.800" lengthAdjust="spacingAndGlyphs">PDF</text></svg>
<div class="lbl" style="left:1053.5px;top:883px;line-height:21px;height:21px;letter-spacing:-1.023px;margin-left:-0.51px">9_AVL_Trees</div>
<svg style="left:0;top:0" width="1919" height="977" viewBox="0 0 1919 977"><rect x="1203" y="763" width="120" height="120" fill="#ee4238"/><path d="M1251 786.700L1282.300 818L1251 849.300L1219.700 818Z" fill="#fff"/><path d="M1274.700 786.700L1306 818L1274.700 849.300L1270.200 844.800L1297 818L1270.200 791.200Z" fill="#fff"/></svg>
<div class="lbl" style="left:1193.5px;top:883px;line-height:21px;height:21px;letter-spacing:-0.432px;margin-left:-0.22px">AnyDesk</div>
<svg style="left:1360.8px;top:767.40px" width="85" height="111" viewBox="0 0 85 111"><defs><linearGradient id="pg64" x1="0" y1="0" x2="0" y2="1"><stop offset="0" stop-color="#f8f8f8"/><stop offset="1" stop-color="#ededed"/></linearGradient><linearGradient id="pf65" x1="0" y1="1" x2="1" y2="0"><stop offset="0" stop-color="#cfcfcf"/><stop offset=".45" stop-color="#f1f1f1"/><stop offset="1" stop-color="#fbfbfb"/></linearGradient></defs><path d="M3 0H53.300L84.300 31V108A3 3 0 0 1 81.300 111H3A3 3 0 0 1 0 108V3A3 3 0 0 1 3 0Z" fill="url(#pg64)"/><path d="M53.300 0L84.300 31H58.300A5 5 0 0 1 53.300 26Z" fill="url(#pf65)"/><circle cx="42.100" cy="68.300" r="29.800" fill="#fff"/><path d="M42.10 53.80L68.59 53.80A30.2 30.2 0 0 0 16.30 52.61L29.54 75.55A14.5 14.5 0 0 1 42.10 53.80Z" fill="#ea4335"/><path d="M29.54 75.55L16.30 52.61A30.2 30.2 0 0 0 41.41 98.49L54.66 75.55A14.5 14.5 0 0 1 29.54 75.55Z" fill="#34a853"/><path d="M54.66 75.55L41.41 98.49A30.2 30.2 0 0 0 68.59 53.80L42.10 53.80A14.5 14.5 0 0 1 54.66 75.55Z" fill="#fbbc04"/><circle cx="42.100" cy="68.300" r="14.500" fill="#fff"/><circle cx="42.100" cy="68.300" r="11.500" fill="#1a73e8"/><path d="M67 83.800H72.100L68.300 86.600Z" fill="#202124"/><rect x="32" y="65.600" width="40.100" height="18.300" fill="#3c4043"/><text x="52.100" y="80.500" text-anchor="middle" font-family="Liberation Sans, sans-serif" font-weight="bold" font-size="14.500" fill="#fff" textLength="31.800" lengthAdjust="spacingAndGlyphs">PDF</text></svg>
<div class="lbl" style="left:1333.5px;top:883px;line-height:21px;height:21px;letter-spacing:-1.266px;margin-left:-0.63px">JD</div>
<svg style="left:1500.8px;top:767.40px" width="85" height="111" viewBox="0 0 85 111"><defs><linearGradient id="pg66" x1="0" y1="0" x2="0" y2="1"><stop offset="0" stop-color="#f8f8f8"/><stop offset="1" stop-color="#ededed"/></linearGradient><linearGradient id="pf67" x1="0" y1="1" x2="1" y2="0"><stop offset="0" stop-color="#cfcfcf"/><stop offset=".45" stop-color="#f1f1f1"/><stop offset="1" stop-color="#fbfbfb"/></linearGradient></defs><path d="M3 0H53.300L84.300 31V108A3 3 0 0 1 81.300 111H3A3 3 0 0 1 0 108V3A3 3 0 0 1 3 0Z" fill="url(#pg66)"/><path d="M53.300 0L84.300 31H58.300A5 5 0 0 1 53.300 26Z" fill="url(#pf67)"/><circle cx="42.100" cy="68.300" r="29.800" fill="#fff"/><path d="M42.10 53.80L68.59 53.80A30.2 30.2 0 0 0 16.30 52.61L29.54 75.55A14.5 14.5 0 0 1 42.10 53.80Z" fill="#ea4335"/><path d="M29.54 75.55L16.30 52.61A30.2 30.2 0 0 0 41.41 98.49L54.66 75.55A14.5 14.5 0 0 1 29.54 75.55Z" fill="#34a853"/><path d="M54.66 75.55L41.41 98.49A30.2 30.2 0 0 0 68.59 53.80L42.10 53.80A14.5 14.5 0 0 1 54.66 75.55Z" fill="#fbbc04"/><circle cx="42.100" cy="68.300" r="14.500" fill="#fff"/><circle cx="42.100" cy="68.300" r="11.500" fill="#1a73e8"/><path d="M67 83.800H72.100L68.300 86.600Z" fill="#202124"/><rect x="32" y="65.600" width="40.100" height="18.300" fill="#3c4043"/><text x="52.100" y="80.500" text-anchor="middle" font-family="Liberation Sans, sans-serif" font-weight="bold" font-size="14.500" fill="#fff" textLength="31.800" lengthAdjust="spacingAndGlyphs">PDF</text></svg>
<div class="lbl" style="left:1472.1px;top:883px;line-height:21px;height:21px;letter-spacing:-0.077px;margin-left:-0.04px">Digital systems</div>
<svg style="left:1640.8px;top:767.40px" width="85" height="111" viewBox="0 0 85 111"><defs><linearGradient id="pg68" x1="0" y1="0" x2="0" y2="1"><stop offset="0" stop-color="#f8f8f8"/><stop offset="1" stop-color="#ededed"/></linearGradient><linearGradient id="pf69" x1="0" y1="1" x2="1" y2="0"><stop offset="0" stop-color="#cfcfcf"/><stop offset=".45" stop-color="#f1f1f1"/><stop offset="1" stop-color="#fbfbfb"/></linearGradient></defs><path d="M3 0H53.300L84.300 31V108A3 3 0 0 1 81.300 111H3A3 3 0 0 1 0 108V3A3 3 0 0 1 3 0Z" fill="url(#pg68)"/><path d="M53.300 0L84.300 31H58.300A5 5 0 0 1 53.300 26Z" fill="url(#pf69)"/><circle cx="42.100" cy="68.300" r="29.800" fill="#fff"/><path d="M42.10 53.80L68.59 53.80A30.2 30.2 0 0 0 16.30 52.61L29.54 75.55A14.5 14.5 0 0 1 42.10 53.80Z" fill="#ea4335"/><path d="M29.54 75.55L16.30 52.61A30.2 30.2 0 0 0 41.41 98.49L54.66 75.55A14.5 14.5 0 0 1 29.54 75.55Z" fill="#34a853"/><path d="M54.66 75.55L41.41 98.49A30.2 30.2 0 0 0 68.59 53.80L42.10 53.80A14.5 14.5 0 0 1 54.66 75.55Z" fill="#fbbc04"/><circle cx="42.100" cy="68.300" r="14.500" fill="#fff"/><circle cx="42.100" cy="68.300" r="11.500" fill="#1a73e8"/><path d="M67 83.800H72.100L68.300 86.600Z" fill="#202124"/><rect x="32" y="65.600" width="40.100" height="18.300" fill="#3c4043"/><text x="52.100" y="80.500" text-anchor="middle" font-family="Liberation Sans, sans-serif" font-weight="bold" font-size="14.500" fill="#fff" textLength="31.800" lengthAdjust="spacingAndGlyphs">PDF</text></svg>
<div class="lbl" style="left:1613.5px;top:883px;line-height:21px;height:21px;letter-spacing:-0.263px;margin-left:-0.13px">Oops</div>
<svg style="left:1780.8px;top:767.40px" width="85" height="111" viewBox="0 0 85 111"><defs><linearGradient id="pg70" x1="0" y1="0" x2="0" y2="1"><stop offset="0" stop-color="#f8f8f8"/><stop offset="1" stop-color="#ededed"/></linearGradient><linearGradient id="pf71" x1="0" y1="1" x2="1" y2="0"><stop offset="0" stop-color="#cfcfcf"/><stop offset=".45" stop-color="#f1f1f1"/><stop offset="1" stop-color="#fbfbfb"/></linearGradient></defs><path d="M3 0H53.300L84.300 31V108A3 3 0 0 1 81.300 111H3A3 3 0 0 1 0 108V3A3 3 0 0 1 3 0Z" fill="url(#pg70)"/><path d="M53.300 0L84.300 31H58.300A5 5 0 0 1 53.300 26Z" fill="url(#pf71)"/><circle cx="42.100" cy="68.300" r="29.800" fill="#fff"/><path d="M42.10 53.80L68.59 53.80A30.2 30.2 0 0 0 16.30 52.61L29.54 75.55A14.5 14.5 0 0 1 42.10 53.80Z" fill="#ea4335"/><path d="M29.54 75.55L16.30 52.61A30.2 30.2 0 0 0 41.41 98.49L54.66 75.55A14.5 14.5 0 0 1 29.54 75.55Z" fill="#34a853"/><path d="M54.66 75.55L41.41 98.49A30.2 30.2 0 0 0 68.59 53.80L42.10 53.80A14.5 14.5 0 0 1 54.66 75.55Z" fill="#fbbc04"/><circle cx="42.100" cy="68.300" r="14.500" fill="#fff"/><circle cx="42.100" cy="68.300" r="11.500" fill="#1a73e8"/><path d="M67 83.800H72.100L68.300 86.600Z" fill="#202124"/><rect x="32" y="65.600" width="40.100" height="18.300" fill="#3c4043"/><text x="52.100" y="80.500" text-anchor="middle" font-family="Liberation Sans, sans-serif" font-weight="bold" font-size="14.500" fill="#fff" textLength="31.800" lengthAdjust="spacingAndGlyphs">PDF</text></svg>
<div class="lbl" style="left:1753.0px;top:883px;line-height:21px;height:21px;letter-spacing:-0.102px;margin-left:-0.05px">Discreet</div>
<div class="lbl" style="left:1751.5px;top:903px;line-height:21px;height:21px;letter-spacing:-0.295px;margin-left:-0.15px">structures</div>
<div class="abs" style="left:1908px;top:344.600px;width:3px;height:163px;background:#8f8f8f;border-radius:1.500px"></div>
</div></div>
<div id="status"></div>
<div class="t" style="left:17.5px;top:953px;line-height:21px;height:21px;font-size:15px;color:#fff;letter-spacing:-0.137px;">343 items</div>
<div class="abs" style="left:92.600px;top:955.600px;width:1.200px;height:15.500px;background:#e8e8e8"></div>
<svg style="left:0;top:0" width="1919" height="977" viewBox="0 0 1919 977" fill="none" stroke-linecap="round" stroke-linejoin="round"><rect x="1858" y="953" width="20.200" height="20.200" rx="2.200" fill="#b6b6b6" stroke="none"/><path d="M1861.200 957.700H1875M1861.200 961.700H1875M1861.200 965.600H1875M1861.200 969.600H1875" stroke="#111" stroke-width="1.100" stroke-linecap="butt"/><rect x="1884" y="948" width="31" height="29" fill="#4f4f4f" stroke="none"/><rect x="1890" y="954" width="20.200" height="20.200" rx="2.200" fill="#b6b6b6" stroke="none"/><rect x="1893.500" y="957.800" width="13.200" height="10.400" fill="#fff" stroke="#111" stroke-width="1.100"/><path d="M1893.200 970.500H1907" stroke="#111" stroke-width="1.100" stroke-linecap="butt"/></svg>
<div id="termshadow"></div>
<div id="term">
<div id="tbar"></div>
<svg style="left:0;top:0" width="1121" height="60" viewBox="0 0 1121 60"><path d="M2 51Q10.500 51 10.500 42.500V19Q10.500 11 18.500 11H303Q311 11 311 19V42.500Q311 51 319.500 51V52H2Z" fill="#0c0c0c"/><rect x="22.500" y="23.200" width="18.200" height="15.200" rx=".8" fill="#000" stroke="#9a9a9a" stroke-width="1"/><rect x="23" y="23.600" width="17.200" height="2.200" fill="#d4d4d4"/><path d="M25.200 28.200H27M28 28.200H29.500M30.500 27.500L32 29.500M33 30H37.500" stroke="#c8c8c8" stroke-width="1" fill="none"/><path d="M279.200 26.500L289.600 36.900M289.600 26.500L279.200 36.900" stroke="#e8e8e8" stroke-width="1.300" fill="none"/><path d="M330.600 31.500H342.800M336.700 25.400V37.600" stroke="#e8e8e8" stroke-width="1.300" fill="none"/><path d="M357.700 16V45.500" stroke="#484848" stroke-width="1" fill="none"/><path d="M369.500 29.800L374.300 34.600L379.100 29.800" stroke="#e8e8e8" stroke-width="1.300" fill="none"/><path d="M969.500 24.900H981.500" stroke="#f4f4f4" stroke-width="1.500" fill="none"/><rect x="1027.600" y="19.700" width="11.700" height="11.700" rx="2" stroke="#f4f4f4" stroke-width="1.500" fill="none"/><path d="M1085.600 19.600L1097.400 31.400M1097.400 19.600L1085.600 31.400" stroke="#f4f4f4" stroke-width="1.400" fill="none"/></svg>
<div class="abs" style="left:54.600px;top:20.700px;width:207px;height:22px;overflow:hidden;white-space:pre;font-size:14.800px;letter-spacing:.470px;line-height:22px;color:#fff;-webkit-text-stroke:.250px #fff">C:\Windows\System32\cmd.exe</div>
<pre id="tt">Microsoft Windows [Version 10.0.26100.7462]
(c) Microsoft Corporation. All rights reserved.

C:\Users\mayur\Downloads&gt;tree
Folder PATH listing for volume OS
Volume serial number is 6229-A383
C:.
├───CascadiaCode-2404.23
│   ├───otf
│   │   └───static
│   ├───ttf
│   │   └───static
│   └───woff2
│       └───static
└───final

C:\Users\mayur\Downloads&gt;</pre>
<div class="abs" style="left:310px;top:429px;width:1.200px;height:23px;background:#e6e6e6"></div>
<div class="abs" style="left:0;top:0;width:1120.400px;height:623px;border:1px solid rgba(255,255,255,.12);border-radius:8.500px"></div>
</div>
</body></html>
